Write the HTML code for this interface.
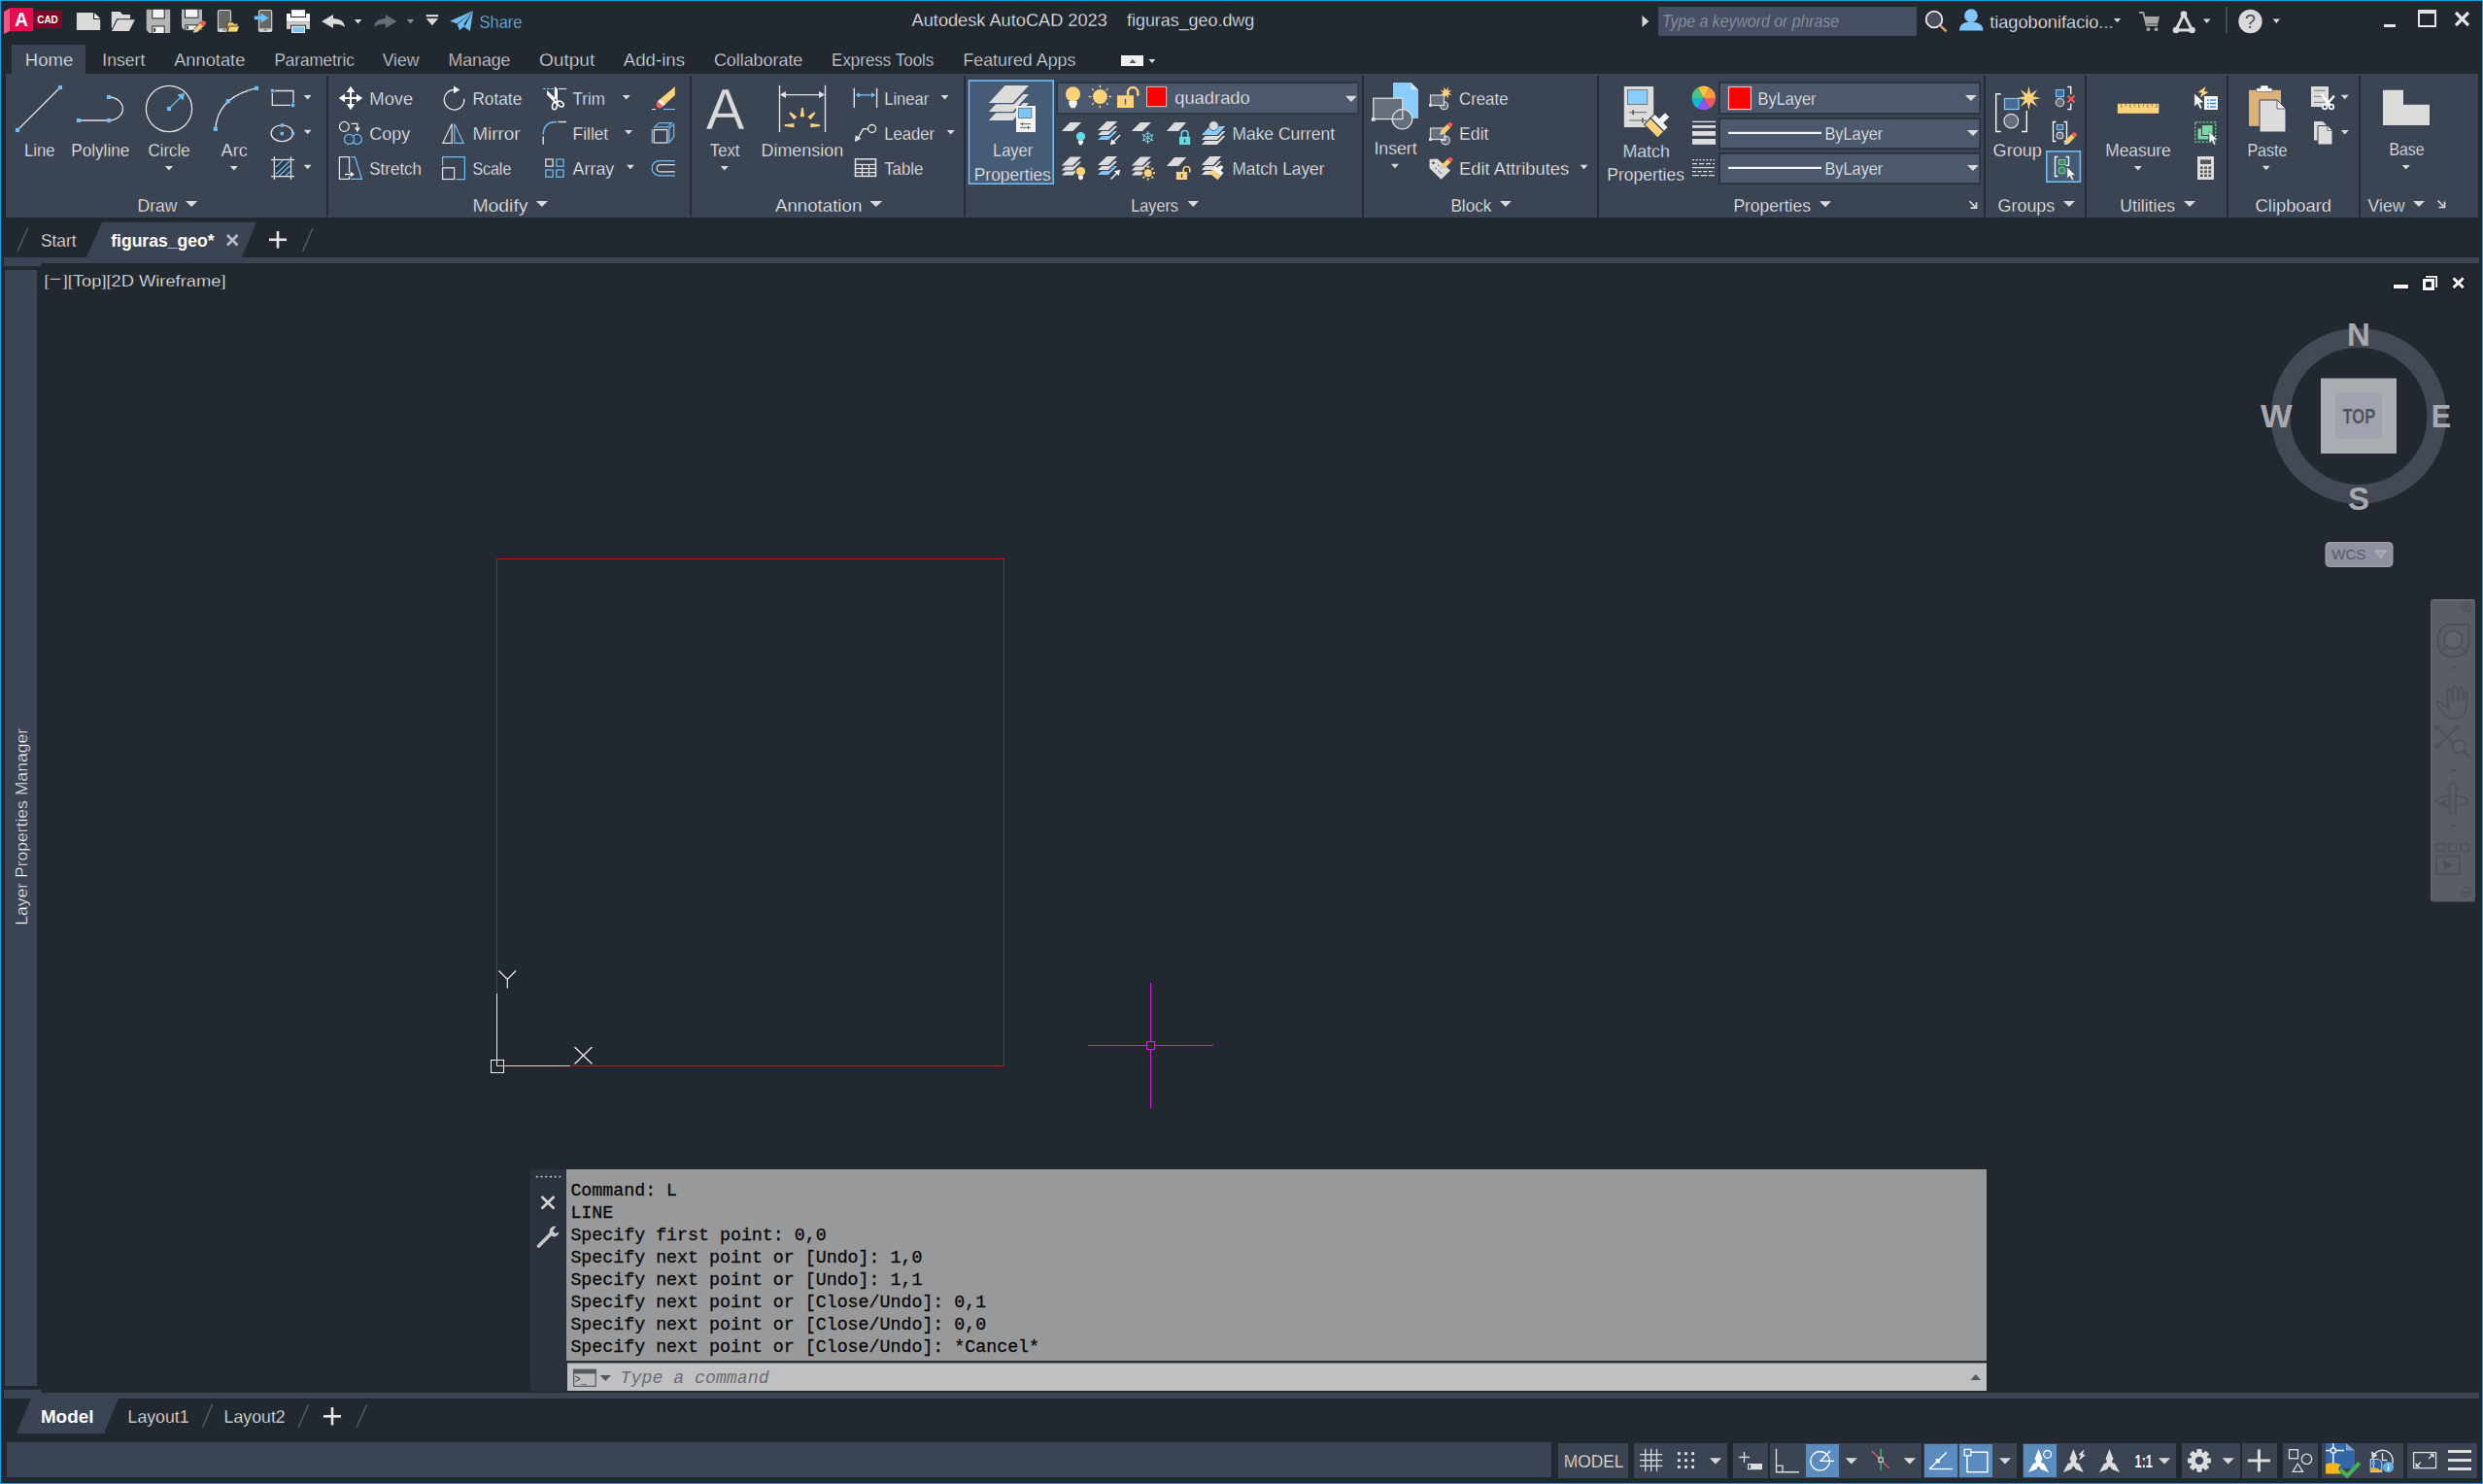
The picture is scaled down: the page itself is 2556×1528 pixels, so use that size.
<!DOCTYPE html>
<html lang="en"><head><meta charset="utf-8"><title>Autodesk AutoCAD 2023 - figuras_geo.dwg</title>
<style>
html,body{margin:0;padding:0;background:#212830;overflow:hidden}
body{width:2556px;height:1528px;font-family:'Liberation Sans',sans-serif}
svg{display:block}
text{white-space:pre}
</style></head><body>
<svg width="2556" height="1528" viewBox="0 0 2556 1528">
<rect x="0" y="0" width="2556" height="1528" fill="#212830" />
<rect x="0" y="0" width="2556" height="1" fill="#0ca3e8" />
<rect x="0" y="0" width="1" height="1528" fill="#0ca3e8" />
<rect x="2555" y="0" width="1" height="1528" fill="#0ca3e8" />
<rect x="0" y="1527" width="2556" height="1" fill="#0ca3e8" />
<rect x="12" y="46" width="76" height="30" fill="#3b4453" />
<rect x="6" y="76" width="2545" height="148" fill="#3b4453" />
<rect x="336" y="78" width="2" height="145" fill="#252c36" />
<rect x="710" y="78" width="2" height="145" fill="#252c36" />
<rect x="992" y="78" width="2" height="145" fill="#252c36" />
<rect x="1402" y="78" width="2" height="145" fill="#252c36" />
<rect x="1644" y="78" width="2" height="145" fill="#252c36" />
<rect x="2042" y="78" width="2" height="145" fill="#252c36" />
<rect x="2146" y="78" width="2" height="145" fill="#252c36" />
<rect x="2292" y="78" width="2" height="145" fill="#252c36" />
<rect x="2428" y="78" width="2" height="145" fill="#252c36" />
<polygon points="105,229 264,229 249,265 89,265" fill="#3b4453" stroke="none" stroke-width="1" />
<rect x="4" y="265" width="2548" height="6" fill="#3b4453" />
<rect x="4" y="271" width="38" height="3" fill="#3b4453" />
<rect x="5" y="278" width="33" height="1149" fill="#3b4453" />
<rect x="4" y="1434" width="2548" height="6" fill="#3b4453" />
<rect x="4" y="1431" width="38" height="3" fill="#3b4453" />
<polygon points="32,1440 122,1440 107,1476 17,1476" fill="#3b4453" stroke="none" stroke-width="1" />
<rect x="7" y="1485" width="1590" height="36" fill="#3b4453" />
<rect x="1604" y="1486" width="72" height="36" fill="#3b4453" />
<rect x="1682" y="1486" width="96" height="36" fill="#3b4453" />
<rect x="1784" y="1486" width="36" height="36" fill="#3b4453" />
<rect x="1822" y="1486" width="156" height="36" fill="#3b4453" />
<rect x="1980" y="1486" width="96" height="36" fill="#3b4453" />
<rect x="2082" y="1486" width="158" height="36" fill="#3b4453" />
<rect x="2246" y="1486" width="60" height="36" fill="#3b4453" />
<rect x="2308" y="1486" width="36" height="36" fill="#3b4453" />
<rect x="2350" y="1486" width="36" height="36" fill="#3b4453" />
<rect x="2390" y="1486" width="84" height="36" fill="#3b4453" />
<rect x="2478" y="1486" width="72" height="36" fill="#3b4453" />
<rect x="1859" y="1487" width="34" height="34" fill="#5b8cc0" />
<rect x="1981" y="1487" width="34" height="34" fill="#5b8cc0" />
<rect x="2017" y="1487" width="34" height="34" fill="#5b8cc0" />
<rect x="2083" y="1487" width="34" height="34" fill="#5b8cc0" />
<polygon points="4,12 10,8.5 10,32 4,35" fill="#e85a82" stroke="none" stroke-width="1" />
<rect x="10" y="8" width="24" height="24" fill="#e50c4f" />
<rect x="34" y="11" width="30" height="18" fill="#7b0828" />
<text x="15.17" y="26.8" font-family="'Liberation Sans', sans-serif" font-size="19.5" fill="#ffffff" font-weight="bold" font-style="normal" text-anchor="start" textLength="13.68" lengthAdjust="spacingAndGlyphs" >A</text>
<text x="38.26" y="24" font-family="'Liberation Sans', sans-serif" font-size="11" fill="#ffffff" font-weight="bold" font-style="normal" text-anchor="start" textLength="21.55" lengthAdjust="spacingAndGlyphs" >CAD</text>
<path d="M78.9 12.9 H96 V20.1 H103.2 V31.1 H78.9 Z" fill="#d9d9d9" stroke="none" stroke-width="1" />
<path d="M97.2 13.3 L103.1 19.1 H97.2 Z" fill="#fafafa" stroke="none" stroke-width="1" />
<path d="M114.8 12 H123.6 L126.3 14.9 H134.1 V19.2 H120.2 L115.6 28.8 L114.8 29.4 Z" fill="#d9d9d9" stroke="none" stroke-width="1" />
<path d="M121 20.3 H138.9 L132.9 31.9 H115 Z" fill="#d9d9d9" stroke="none" stroke-width="1" />
<path d="M150.7 9.7 H175.2 V34 H153.7 L150.7 31 Z" fill="#b4b4b4" stroke="none" stroke-width="1" />
<rect x="156.8" y="9.2" width="12.4" height="9.7" fill="#f2f2f2" stroke="#212830" stroke-width="1"/>
<rect x="156.8" y="27" width="12.4" height="7.5" fill="#f2f2f2" stroke="#212830" stroke-width="1"/>
<rect x="158.4" y="28.9" width="1.7" height="4" fill="#222" />
<path d="M187 9.7 H208 V30.8 H189.6 L187 28.2 Z" fill="#b4b4b4" stroke="none" stroke-width="1" />
<rect x="190.5" y="9.2" width="13.5" height="9" fill="#f2f2f2" stroke="#212830" stroke-width="1"/>
<rect x="190.9" y="25.8" width="12.5" height="5.5" fill="#f2f2f2" stroke="#212830" stroke-width="1"/>
<rect x="192.3" y="27" width="1.5" height="3" fill="#222" />
<path d="M198.9 33.8 L200.2 29.4 L207 22.2 L211 26 L203.8 32.8 Z" fill="#f7cb6c" stroke="#212830" stroke-width="0.8" />
<path d="M205.6 23.7 L207.6 21.6 Q210 20.6 211.8 22.8 Q212.6 24.4 211.4 25.6 L209.5 27.5 Z" fill="#f0585c" stroke="none" stroke-width="1" />
<path d="M198.9 33.8 L200.2 29.4 L203.8 32.8 Z" fill="#d2d2d2" stroke="none" stroke-width="1" />
<rect x="224.5" y="10.5" width="13" height="22" fill="#666666" rx="1.6" stroke="#d0d0d0" stroke-width="1.2"/>
<rect x="225.1" y="29.4" width="11.8" height="2.6" fill="#d0d0d0" />
<rect x="229.5" y="30.4" width="3" height="0.9" fill="#444" />
<path d="M234 22.7 H239.5 L241 24.2 H245 V33 H234 Z" fill="#f3c254" stroke="#212830" stroke-width="0.8" />
<path d="M236.2 27 H246.6 L244.3 33 H233.8 Z" fill="#fdd67c" stroke="#212830" stroke-width="0.8" />
<rect x="266.5" y="10.5" width="13.2" height="22" fill="#666666" rx="1.6" stroke="#d0d0d0" stroke-width="1.2"/>
<rect x="267.1" y="29.4" width="12" height="2.6" fill="#d0d0d0" />
<rect x="271.6" y="30.4" width="3" height="0.9" fill="#444" />
<path d="M261.8 16.6 H268.6 V13.4 L276.8 18.5 L268.6 23.6 V20.3 H261.8 Z" fill="#6cc0f8" stroke="none" stroke-width="1" />
<rect x="295" y="14" width="24" height="8.2" fill="#fafafa" />
<rect x="295" y="22.2" width="24" height="7.8" fill="#cdcdcd" />
<rect x="299.5" y="9.7" width="15.1" height="7.8" fill="#fafafa" stroke="#212830" stroke-width="1"/>
<rect x="299.5" y="26.2" width="15.1" height="8.2" fill="#fafafa" stroke="#212830" stroke-width="1"/>
<rect x="301.2" y="27.8" width="11.8" height="5.2" fill="#7cc4f3" />
<path d="M331.1 21.9 L343 15.1 V19.1 Q354.2 19.3 355 28 Q350.5 24.3 343 24.8 V29.1 Z" fill="#d9d9d9" stroke="none" stroke-width="1" />
<polygon points="364.9,19.9 372.3,19.9 368.6,24.6" fill="#d9d9d9" stroke="none" stroke-width="1" />
<path d="M408.6 21.9 L396.8 15.1 V19.1 Q385.8 19.3 385.1 28 Q389.5 24.3 396.8 24.8 V29.1 Z" fill="#656b77" stroke="none" stroke-width="1" />
<polygon points="418.8,19.9 426.3,19.9 422.55,24.6" fill="#888c94" stroke="none" stroke-width="1" />
<rect x="438.7" y="15.1" width="12.4" height="2.2" fill="#d9d9d9" />
<polygon points="438.7,19.1 451.1,19.1 444.9,26.2" fill="#d9d9d9" stroke="none" stroke-width="1" />
<polygon points="463.1,21.7 487,11.1 470.4,24.6" fill="#6cbdf2" stroke="none" stroke-width="1" />
<polygon points="470.9,25.2 487,11.1 473,31.6" fill="#6cbdf2" stroke="none" stroke-width="1" />
<polygon points="478,27.9 487,11.1 483.9,31.9" fill="#6cbdf2" stroke="none" stroke-width="1" />
<polygon points="473.6,30.4 478.5,27 476,23" fill="#6cbdf2" stroke="none" stroke-width="1" />
<text x="493.6" y="28.8" font-family="'Liberation Sans', sans-serif" font-size="18" fill="#74c0f4" font-weight="normal" font-style="normal" text-anchor="start" textLength="43.9" lengthAdjust="spacingAndGlyphs"  stroke="#212830" stroke-width="0.36">Share</text>
<polygon points="1690.5,16 1697.3,22 1690.5,28" fill="#d9d9d9" stroke="none" stroke-width="1" />
<rect x="1707" y="7" width="266" height="30" fill="#464f63" />
<text x="1711.01" y="28" font-family="'Liberation Sans', sans-serif" font-size="17.5" fill="#9aa1ae" font-weight="normal" font-style="italic" text-anchor="start" textLength="182.17" lengthAdjust="spacingAndGlyphs"  stroke="#464f63" stroke-width="0.36">Type a keyword or phrase</text>
<circle cx="1991" cy="20" r="8.3" fill="#4a505b" stroke="#ececec" stroke-width="1.8" />
<line x1="1997.3" y1="26.3" x2="2003.6" y2="32.3" stroke="#e0a866" stroke-width="2.3" />
<circle cx="2029" cy="16.2" r="6.9" fill="#80c6fa" stroke="none" stroke-width="1" />
<path d="M2017 31.6 Q2017 22.5 2029 22.5 Q2041.5 22.5 2041.5 31.6 Z" fill="#80c6fa" stroke="none" stroke-width="1" />
<text x="2048.18" y="28.8" font-family="'Liberation Sans', sans-serif" font-size="19" fill="#f8f8f8" font-weight="normal" font-style="normal" text-anchor="start" textLength="127.35" lengthAdjust="spacingAndGlyphs"  stroke="#212830" stroke-width="0.36">tiagobonifacio...</text>
<polygon points="2176,19 2183,19 2179.5,23.2" fill="#d9d9d9" stroke="none" stroke-width="1" />
<path d="M2202 12.8 H2206.3 L2209.6 26.2 H2221" fill="none" stroke="#a6a6a6" stroke-width="1.8" />
<path d="M2207.6 17 H2223 L2221.2 24.6 H2209.4 Z" fill="#a6a6a6" stroke="none" stroke-width="1" />
<circle cx="2211.4" cy="30.2" r="1.9" fill="#a6a6a6" stroke="none" stroke-width="1" />
<circle cx="2219.6" cy="30.2" r="1.9" fill="#a6a6a6" stroke="none" stroke-width="1" />
<path d="M2248 14.5 L2256.5 31 H2240 Z" fill="none" stroke="#d9d9d9" stroke-width="3" stroke-linejoin="round"/>
<circle cx="2248" cy="14.5" r="3.3" fill="#d9d9d9" stroke="none" stroke-width="1" />
<circle cx="2240" cy="31" r="3.3" fill="#d9d9d9" stroke="none" stroke-width="1" />
<circle cx="2256.5" cy="31" r="3.3" fill="#d9d9d9" stroke="none" stroke-width="1" />
<polygon points="2268,19.6 2275.4,19.6 2271.7,24" fill="#d9d9d9" stroke="none" stroke-width="1" />
<rect x="2291" y="7" width="1.6" height="27" fill="#4b5565" />
<circle cx="2316.5" cy="22" r="12.2" fill="#d9d9d9" stroke="none" stroke-width="1" />
<text x="2316.5" y="29" font-family="'Liberation Sans', sans-serif" font-size="19.5" fill="#4a4f58" font-weight="normal" font-style="normal" text-anchor="middle" >?</text>
<polygon points="2339.6,19.6 2347,19.6 2343.3,24" fill="#d9d9d9" stroke="none" stroke-width="1" />
<rect x="2454" y="25" width="12" height="3" fill="#e6e6e6" />
<rect x="2490" y="11" width="17" height="16" fill="none" stroke="#e6e6e6" stroke-width="2" />
<rect x="2489" y="10" width="19" height="4" fill="#e0e0e0" />
<line x1="2528" y1="13" x2="2541" y2="26" stroke="#e6e6e6" stroke-width="3.2" />
<line x1="2541" y1="13" x2="2528" y2="26" stroke="#e6e6e6" stroke-width="3.2" />
<text x="938.6" y="27.3" font-family="'Liberation Sans', sans-serif" font-size="18" fill="#f8f8f8" font-weight="normal" font-style="normal" text-anchor="start" textLength="201.2" lengthAdjust="spacingAndGlyphs"  stroke="#212830" stroke-width="0.36">Autodesk AutoCAD 2023</text>
<text x="1160" y="27.3" font-family="'Liberation Sans', sans-serif" font-size="18" fill="#f8f8f8" font-weight="normal" font-style="normal" text-anchor="start" textLength="131.2" lengthAdjust="spacingAndGlyphs"  stroke="#212830" stroke-width="0.36">figuras_geo.dwg</text>
<text x="25.8" y="68.1" font-family="'Liberation Sans', sans-serif" font-size="18" fill="#f2f2f2" font-weight="normal" font-style="normal" text-anchor="start" textLength="49.4" lengthAdjust="spacingAndGlyphs"  stroke="#3b4453" stroke-width="0.36">Home</text>
<text x="105.3" y="68.1" font-family="'Liberation Sans', sans-serif" font-size="18" fill="#dee1e5" font-weight="normal" font-style="normal" text-anchor="start" textLength="44.1" lengthAdjust="spacingAndGlyphs"  stroke="#212830" stroke-width="0.36">Insert</text>
<text x="179.2" y="68.1" font-family="'Liberation Sans', sans-serif" font-size="18" fill="#dee1e5" font-weight="normal" font-style="normal" text-anchor="start" textLength="73.1" lengthAdjust="spacingAndGlyphs"  stroke="#212830" stroke-width="0.36">Annotate</text>
<text x="282.4" y="68.1" font-family="'Liberation Sans', sans-serif" font-size="18" fill="#dee1e5" font-weight="normal" font-style="normal" text-anchor="start" textLength="82.4" lengthAdjust="spacingAndGlyphs"  stroke="#212830" stroke-width="0.36">Parametric</text>
<text x="393.7" y="68.1" font-family="'Liberation Sans', sans-serif" font-size="18" fill="#dee1e5" font-weight="normal" font-style="normal" text-anchor="start" textLength="37.6" lengthAdjust="spacingAndGlyphs"  stroke="#212830" stroke-width="0.36">View</text>
<text x="461.4" y="68.1" font-family="'Liberation Sans', sans-serif" font-size="18" fill="#dee1e5" font-weight="normal" font-style="normal" text-anchor="start" textLength="64.1" lengthAdjust="spacingAndGlyphs"  stroke="#212830" stroke-width="0.36">Manage</text>
<text x="555" y="68.1" font-family="'Liberation Sans', sans-serif" font-size="18" fill="#dee1e5" font-weight="normal" font-style="normal" text-anchor="start" textLength="57.3" lengthAdjust="spacingAndGlyphs"  stroke="#212830" stroke-width="0.36">Output</text>
<text x="641.8" y="68.1" font-family="'Liberation Sans', sans-serif" font-size="18" fill="#dee1e5" font-weight="normal" font-style="normal" text-anchor="start" textLength="63.2" lengthAdjust="spacingAndGlyphs"  stroke="#212830" stroke-width="0.36">Add-ins</text>
<text x="734.9" y="68.1" font-family="'Liberation Sans', sans-serif" font-size="18" fill="#dee1e5" font-weight="normal" font-style="normal" text-anchor="start" textLength="91.4" lengthAdjust="spacingAndGlyphs"  stroke="#212830" stroke-width="0.36">Collaborate</text>
<text x="856.1" y="68.1" font-family="'Liberation Sans', sans-serif" font-size="18" fill="#dee1e5" font-weight="normal" font-style="normal" text-anchor="start" textLength="105.2" lengthAdjust="spacingAndGlyphs"  stroke="#212830" stroke-width="0.36">Express Tools</text>
<text x="991.4" y="68.1" font-family="'Liberation Sans', sans-serif" font-size="18" fill="#dee1e5" font-weight="normal" font-style="normal" text-anchor="start" textLength="116" lengthAdjust="spacingAndGlyphs"  stroke="#212830" stroke-width="0.36">Featured Apps</text>
<rect x="1154" y="57" width="23" height="11" fill="#f0f0f0" />
<polygon points="1162.5,65 1169.5,65 1166,61" fill="#555" stroke="none" stroke-width="1" />
<polygon points="1182.4,61 1189.4,61 1185.9,65" fill="#d9d9d9" stroke="none" stroke-width="1" />
<line x1="28.6" y1="235" x2="18" y2="259" stroke="#59616e" stroke-width="1.3" />
<text x="41.91" y="254" font-family="'Liberation Sans', sans-serif" font-size="17.5" fill="#f8f8f8" font-weight="normal" font-style="normal" text-anchor="start" textLength="36.58" lengthAdjust="spacingAndGlyphs"  stroke="#212830" stroke-width="0.36">Start</text>
<text x="114.21" y="254" font-family="'Liberation Sans', sans-serif" font-size="17.5" fill="#ffffff" font-weight="bold" font-style="normal" text-anchor="start" textLength="106.28" lengthAdjust="spacingAndGlyphs" >figuras_geo*</text>
<line x1="234" y1="242" x2="244.5" y2="252.5" stroke="#b8bcc4" stroke-width="2.6" />
<line x1="244.5" y1="242" x2="234" y2="252.5" stroke="#b8bcc4" stroke-width="2.6" />
<rect x="277" y="245.5" width="18" height="2.6" fill="#e6e6e6" />
<rect x="284.7" y="238" width="2.6" height="17.6" fill="#e6e6e6" />
<line x1="322" y1="235" x2="311.5" y2="259" stroke="#59616e" stroke-width="1.3" />
<text x="45.5" y="295.4" font-family="'Liberation Sans', sans-serif" font-size="17" fill="#f8f8f8" font-weight="normal" font-style="normal" text-anchor="start"  stroke="#212830" stroke-width="0.36">[</text>
<text x="50.2" y="292.9" font-family="'Liberation Sans', sans-serif" font-size="17" fill="#f8f8f8" font-weight="normal" font-style="normal" text-anchor="start" textLength="13.2" lengthAdjust="spacingAndGlyphs"  stroke="#212830" stroke-width="0.36">−</text>
<text x="64.72" y="295.4" font-family="'Liberation Sans', sans-serif" font-size="17" fill="#f8f8f8" font-weight="normal" font-style="normal" text-anchor="start" textLength="167.75" lengthAdjust="spacingAndGlyphs"  stroke="#212830" stroke-width="0.36">][Top][2D Wireframe]</text>
<g transform="translate(27.8,952.8) rotate(-90)">
<text x="0" y="0" font-family="'Liberation Sans', sans-serif" font-size="17.3" fill="#f8f8f8" font-weight="normal" font-style="normal" text-anchor="start" textLength="202.8" lengthAdjust="spacingAndGlyphs"  stroke="#3b4453" stroke-width="0.36">Layer Properties Manager</text>
</g>
<text x="41.91" y="1465.4" font-family="'Liberation Sans', sans-serif" font-size="17.5" fill="#ffffff" font-weight="bold" font-style="normal" text-anchor="start" textLength="54.48" lengthAdjust="spacingAndGlyphs" >Model</text>
<text x="131.61" y="1465.4" font-family="'Liberation Sans', sans-serif" font-size="17.5" fill="#f8f8f8" font-weight="normal" font-style="normal" text-anchor="start" textLength="62.88" lengthAdjust="spacingAndGlyphs"  stroke="#212830" stroke-width="0.36">Layout1</text>
<text x="230.61" y="1465.4" font-family="'Liberation Sans', sans-serif" font-size="17.5" fill="#f8f8f8" font-weight="normal" font-style="normal" text-anchor="start" textLength="63.07" lengthAdjust="spacingAndGlyphs"  stroke="#212830" stroke-width="0.36">Layout2</text>
<line x1="218.5" y1="1446" x2="208.6" y2="1469.7" stroke="#59616e" stroke-width="1.3" />
<line x1="317.7" y1="1446" x2="307" y2="1469.7" stroke="#59616e" stroke-width="1.3" />
<line x1="377.8" y1="1446" x2="367" y2="1469.7" stroke="#59616e" stroke-width="1.3" />
<rect x="333" y="1457" width="18" height="2.6" fill="#e6e6e6" />
<rect x="340.7" y="1449" width="2.6" height="18.4" fill="#e6e6e6" />
<line x1="18" y1="134" x2="62" y2="90" stroke="#e2e2e2" stroke-width="1.3" />
<rect x="15.9" y="131.9" width="4.2" height="4.2" fill="#6cbdf2" />
<rect x="59.9" y="87.9" width="4.2" height="4.2" fill="#6cbdf2" />
<text x="24.9" y="161.2" font-family="'Liberation Sans', sans-serif" font-size="18" fill="#f8f8f8" font-weight="normal" font-style="normal" text-anchor="start" textLength="31.6" lengthAdjust="spacingAndGlyphs"  stroke="#3b4453" stroke-width="0.36">Line</text>
<path d="M81 124 H112 M112 100 A14.4 12 0 0 1 112 124" fill="none" stroke="#e2e2e2" stroke-width="1.3" />
<rect x="78.9" y="121.9" width="4.2" height="4.2" fill="#6cbdf2" />
<rect x="109.9" y="121.9" width="4.2" height="4.2" fill="#6cbdf2" />
<rect x="109.9" y="97.9" width="4.2" height="4.2" fill="#6cbdf2" />
<text x="73.3" y="161.2" font-family="'Liberation Sans', sans-serif" font-size="18" fill="#f8f8f8" font-weight="normal" font-style="normal" text-anchor="start" textLength="60" lengthAdjust="spacingAndGlyphs"  stroke="#3b4453" stroke-width="0.36">Polyline</text>
<circle cx="174" cy="112" r="23.6" fill="none" stroke="#e2e2e2" stroke-width="1.3" />
<line x1="174" y1="112" x2="186.5" y2="99.5" stroke="#6cbdf2" stroke-width="1.3" />
<polygon points="190,96 188.5,103.5 182.5,97.5" fill="#6cbdf2" stroke="none" stroke-width="1" />
<rect x="171.9" y="109.9" width="4.2" height="4.2" fill="#6cbdf2" />
<text x="152.6" y="161.2" font-family="'Liberation Sans', sans-serif" font-size="18" fill="#f8f8f8" font-weight="normal" font-style="normal" text-anchor="start" textLength="42.9" lengthAdjust="spacingAndGlyphs"  stroke="#3b4453" stroke-width="0.36">Circle</text>
<polygon points="169.9,170.9 178.1,170.9 174,175.5" fill="#d9d9d9" stroke="none" stroke-width="1" />
<path d="M221.8 132.8 Q224 100 264 90.8" fill="none" stroke="#e2e2e2" stroke-width="1.3" />
<rect x="219.7" y="130.7" width="4.2" height="4.2" fill="#6cbdf2" />
<rect x="232.7" y="102.1" width="4.2" height="4.2" fill="#6cbdf2" />
<rect x="261.9" y="88.7" width="4.2" height="4.2" fill="#6cbdf2" />
<text x="227.6" y="161.2" font-family="'Liberation Sans', sans-serif" font-size="18" fill="#f8f8f8" font-weight="normal" font-style="normal" text-anchor="start" textLength="27.2" lengthAdjust="spacingAndGlyphs"  stroke="#3b4453" stroke-width="0.36">Arc</text>
<polygon points="236.7,170.9 244.9,170.9 240.8,175.5" fill="#d9d9d9" stroke="none" stroke-width="1" />
<path d="M283 93.5 H302 V106 M298.8 108.4 H280.3 V96" fill="none" stroke="#e2e2e2" stroke-width="1.3" />
<rect x="278.9" y="91.8" width="3.4" height="3.4" fill="#6cbdf2" />
<rect x="299.8" y="106.7" width="3.4" height="3.4" fill="#6cbdf2" />
<polygon points="312.8,98 320.6,98 316.7,102.4" fill="#d9d9d9" stroke="none" stroke-width="1" />
<ellipse cx="290.3" cy="137.2" rx="11.2" ry="8.4" fill="none" stroke="#e2e2e2" stroke-width="1.3" />
<rect x="288.6" y="135.8" width="3.4" height="3.4" fill="#6cbdf2" />
<rect x="288.6" y="127.3" width="3.4" height="3.4" fill="#6cbdf2" />
<rect x="299.8" y="135.8" width="3.4" height="3.4" fill="#6cbdf2" />
<polygon points="312.8,133.8 320.6,133.8 316.7,138.2" fill="#d9d9d9" stroke="none" stroke-width="1" />
<rect x="283" y="165" width="16" height="16.5" fill="#2f3744" />
<g stroke="#6cbdf2" stroke-width="1.3">
<line x1="284" y1="172" x2="291" y2="165.5"/>
<line x1="284" y1="179.5" x2="298" y2="166"/>
<line x1="287.5" y1="181" x2="298.5" y2="170.5"/>
<line x1="294" y1="181" x2="298.5" y2="176.5"/>
</g>
<line x1="279.1" y1="164.5" x2="303.1" y2="164.5" stroke="#e2e2e2" stroke-width="1.3" />
<line x1="279.1" y1="181.6" x2="303.1" y2="181.6" stroke="#e2e2e2" stroke-width="1.3" />
<line x1="282.4" y1="161.2" x2="282.4" y2="184.9" stroke="#e2e2e2" stroke-width="1.3" />
<line x1="299.5" y1="161.2" x2="299.5" y2="184.9" stroke="#e2e2e2" stroke-width="1.3" />
<polygon points="312.8,169.8 320.6,169.8 316.7,174.2" fill="#d9d9d9" stroke="none" stroke-width="1" />
<text x="141.6" y="217.7" font-family="'Liberation Sans', sans-serif" font-size="18" fill="#f8f8f8" font-weight="normal" font-style="normal" text-anchor="start" textLength="40.9" lengthAdjust="spacingAndGlyphs"  stroke="#3b4453" stroke-width="0.36">Draw</text>
<polygon points="191,207 203.3,207 197.15,213" fill="#d9d9d9" stroke="none" stroke-width="1" />
<g stroke="#ffffff" stroke-width="2" fill="#ffffff">
<line x1="352" y1="101" x2="370" y2="101"/><line x1="361" y1="92" x2="361" y2="110"/>
</g>
<polygon points="361,88.8 365.3,95 356.7,95" fill="#ffffff" stroke="none" stroke-width="1" />
<polygon points="361,113.2 365.3,107 356.7,107" fill="#ffffff" stroke="none" stroke-width="1" />
<polygon points="348.8,101 355,96.7 355,105.3" fill="#ffffff" stroke="none" stroke-width="1" />
<polygon points="373.2,101 367,96.7 367,105.3" fill="#ffffff" stroke="none" stroke-width="1" />
<text x="380.3" y="108.1" font-family="'Liberation Sans', sans-serif" font-size="18" fill="#f8f8f8" font-weight="normal" font-style="normal" text-anchor="start" textLength="45" lengthAdjust="spacingAndGlyphs"  stroke="#3b4453" stroke-width="0.36">Move</text>
<circle cx="354.4" cy="130.4" r="4.9" fill="none" stroke="#e2e2e2" stroke-width="1.25" />
<circle cx="367.4" cy="143.4" r="5" fill="none" stroke="#6cbdf2" stroke-width="1.25" />
<circle cx="359.5" cy="143.4" r="5" fill="#3b4453" stroke="#6cbdf2" stroke-width="1.25" />
<path d="M361.5 127.4 H367.9 V132" fill="none" stroke="#e2e2e2" stroke-width="1.25" />
<polygon points="365,131.6 370.8,131.6 367.9,136" fill="#f2f2f2" stroke="none" stroke-width="1" />
<text x="380.3" y="143.9" font-family="'Liberation Sans', sans-serif" font-size="18" fill="#f8f8f8" font-weight="normal" font-style="normal" text-anchor="start" textLength="41.9" lengthAdjust="spacingAndGlyphs"  stroke="#3b4453" stroke-width="0.36">Copy</text>
<path d="M359.6 177.6 V161.6 H349.4 V184.4 H359.6 V181.6" fill="none" stroke="#e2e2e2" stroke-width="1.25" />
<path d="M361.5 161.6 H365.4 L372.4 184.4 H361.2" fill="none" stroke="#6cbdf2" stroke-width="1.25" />
<line x1="355" y1="179.5" x2="362" y2="179.5" stroke="#f2f2f2" stroke-width="1.3" />
<polygon points="360.8,176.8 364.9,179.5 360.8,182.2" fill="#f2f2f2" stroke="none" stroke-width="1" />
<text x="380.3" y="180" font-family="'Liberation Sans', sans-serif" font-size="18" fill="#f8f8f8" font-weight="normal" font-style="normal" text-anchor="start" textLength="53.7" lengthAdjust="spacingAndGlyphs"  stroke="#3b4453" stroke-width="0.36">Stretch</text>
<path d="M467.2 92.5 A10.3 10.3 0 1 0 477.8 101.6" fill="none" stroke="#e2e2e2" stroke-width="1.3" />
<polygon points="467,88.6 473.4,92.4 467,96.2" fill="#f4f4f4" stroke="none" stroke-width="1" />
<text x="486.4" y="108.1" font-family="'Liberation Sans', sans-serif" font-size="18" fill="#f8f8f8" font-weight="normal" font-style="normal" text-anchor="start" textLength="50.9" lengthAdjust="spacingAndGlyphs"  stroke="#3b4453" stroke-width="0.36">Rotate</text>
<path d="M465.2 127.6 L455.8 147.3 H465.2 Z" fill="none" stroke="#e2e2e2" stroke-width="1.2" />
<path d="M467.8 127.6 L477.2 147.3 H467.8 Z" fill="none" stroke="#6cbdf2" stroke-width="1.2" />
<text x="486.4" y="143.9" font-family="'Liberation Sans', sans-serif" font-size="18" fill="#f8f8f8" font-weight="normal" font-style="normal" text-anchor="start" textLength="49.1" lengthAdjust="spacingAndGlyphs"  stroke="#3b4453" stroke-width="0.36">Mirror</text>
<path d="M455.6 170.8 V161.7 H478.4 V184.5 H469.5" fill="none" stroke="#6cbdf2" stroke-width="1.25" />
<rect x="455.6" y="172.8" width="12" height="11.7" fill="none" stroke="#e2e2e2" stroke-width="1.25" />
<text x="486.4" y="180" font-family="'Liberation Sans', sans-serif" font-size="18" fill="#f8f8f8" font-weight="normal" font-style="normal" text-anchor="start" textLength="39.9" lengthAdjust="spacingAndGlyphs"  stroke="#3b4453" stroke-width="0.36">Scale</text>
<line x1="558.9" y1="91.5" x2="570" y2="91.5" stroke="#7cc6fb" stroke-width="1.2" stroke-dasharray="3 1"/>
<line x1="574.9" y1="91.5" x2="583.2" y2="91.5" stroke="#e2e2e2" stroke-width="1.2" />
<path d="M570.8 88.9 L574 91.6 V104 L570.8 105 Z" fill="#fafafa" stroke="none" stroke-width="1" />
<path d="M563 92.9 L570.8 100.3 L573.5 105 L571 106 L563 97.5 Z" fill="#fafafa" stroke="none" stroke-width="1" />
<ellipse cx="570.9" cy="109.1" rx="2.4" ry="3.6" fill="none" stroke="#fafafa" stroke-width="1.5" transform="rotate(8 570.9 109.1)"/>
<ellipse cx="577" cy="107" rx="2.4" ry="3.6" fill="none" stroke="#fafafa" stroke-width="1.5" transform="rotate(-52 577 107)"/>
<path d="M572.6 104 L575 105" fill="none" stroke="#fafafa" stroke-width="1.6" />
<circle cx="571.9" cy="102.9" r="0.8" fill="#1c222b" stroke="none" stroke-width="1" />
<text x="589.6" y="108.1" font-family="'Liberation Sans', sans-serif" font-size="18" fill="#f8f8f8" font-weight="normal" font-style="normal" text-anchor="start" textLength="33.4" lengthAdjust="spacingAndGlyphs"  stroke="#3b4453" stroke-width="0.36">Trim</text>
<polygon points="640.8,97.95 648.8,97.95 644.8,102.45" fill="#d9d9d9" stroke="none" stroke-width="1" />
<path d="M559.2 138.5 Q559.5 125.5 573 125.5" fill="none" stroke="#6cbdf2" stroke-width="1.4" />
<line x1="574.5" y1="125.5" x2="583" y2="125.5" stroke="#e2e2e2" stroke-width="1.4" />
<line x1="559.2" y1="140.5" x2="559.2" y2="148.8" stroke="#e2e2e2" stroke-width="1.4" />
<text x="589.6" y="143.9" font-family="'Liberation Sans', sans-serif" font-size="18" fill="#f8f8f8" font-weight="normal" font-style="normal" text-anchor="start" textLength="36.6" lengthAdjust="spacingAndGlyphs"  stroke="#3b4453" stroke-width="0.36">Fillet</text>
<polygon points="643,133.95 651,133.95 647,138.45" fill="#d9d9d9" stroke="none" stroke-width="1" />
<rect x="561.8" y="164" width="7.3" height="7.2" fill="none" stroke="#e2e2e2" stroke-width="1.25" />
<rect x="572.8" y="164" width="7.3" height="7.2" fill="none" stroke="#6cbdf2" stroke-width="1.25" />
<rect x="561.8" y="175" width="7.3" height="7.2" fill="none" stroke="#6cbdf2" stroke-width="1.25" />
<rect x="572.8" y="175" width="7.3" height="7.2" fill="none" stroke="#6cbdf2" stroke-width="1.25" />
<text x="589.6" y="180" font-family="'Liberation Sans', sans-serif" font-size="18" fill="#f8f8f8" font-weight="normal" font-style="normal" text-anchor="start" textLength="42.7" lengthAdjust="spacingAndGlyphs"  stroke="#3b4453" stroke-width="0.36">Array</text>
<polygon points="645,169.75 653,169.75 649,174.25" fill="#d9d9d9" stroke="none" stroke-width="1" />
<path d="M694.8 89.2 V98 L684.5 107.5 L678.5 103 Z" fill="#fdd27a" stroke="none" stroke-width="1" />
<path d="M678.8 102.6 L684.8 107.3 L682.6 109.6 L676.8 104.6 Z" fill="#fafafa" stroke="none" stroke-width="1" />
<path d="M676.8 104.6 L682.6 109.6 Q680 112.6 677 110.8 Q674.2 108 676.8 104.6 Z" fill="#f46464" stroke="none" stroke-width="1" />
<line x1="671" y1="112.5" x2="675" y2="112.5" stroke="#e2e2e2" stroke-width="1.2" />
<line x1="683" y1="112.5" x2="695" y2="112.5" stroke="#6cbdf2" stroke-width="1.2" />
<rect x="673.2" y="133.6" width="13.6" height="13.4" fill="none" stroke="#e2e2e2" stroke-width="1.25" />
<line x1="671.2" y1="133" x2="671.2" y2="147.6" stroke="#6cbdf2" stroke-width="1.2" />
<path d="M673.6 130.9 L678.2 126.6 H691.4 L687.2 130.9 Z" fill="none" stroke="#6cbdf2" stroke-width="1.2" />
<path d="M688.9 131.8 L693.7 128 V141 L688.9 146.6 Z" fill="none" stroke="#6cbdf2" stroke-width="1.2" />
<path d="M694.9 165.5 H678.7 A7.65 7.65 0 0 0 678.7 180.8 H694.9" fill="none" stroke="#6cbdf2" stroke-width="1.25" />
<path d="M694.9 169.5 H679.8 A3.7 3.7 0 0 0 679.8 176.9 H694.9" fill="none" stroke="#e2e2e2" stroke-width="1.25" />
<text x="486.4" y="217.7" font-family="'Liberation Sans', sans-serif" font-size="18" fill="#f8f8f8" font-weight="normal" font-style="normal" text-anchor="start" textLength="57.1" lengthAdjust="spacingAndGlyphs"  stroke="#3b4453" stroke-width="0.36">Modify</text>
<polygon points="551.8,207 564,207 557.9,213" fill="#d9d9d9" stroke="none" stroke-width="1" />
<text x="746.5" y="133.4" font-family="'Liberation Sans', sans-serif" font-size="59.5" fill="#dadada" font-weight="normal" font-style="normal" text-anchor="middle"  stroke="#3b4453" stroke-width="0.36">A</text>
<text x="730.8" y="160.8" font-family="'Liberation Sans', sans-serif" font-size="18" fill="#f8f8f8" font-weight="normal" font-style="normal" text-anchor="start" textLength="30.7" lengthAdjust="spacingAndGlyphs"  stroke="#3b4453" stroke-width="0.36">Text</text>
<polygon points="741.8,170.95 749.8,170.95 745.8,175.45" fill="#d9d9d9" stroke="none" stroke-width="1" />
<line x1="802.5" y1="87.8" x2="802.5" y2="136" stroke="#e2e2e2" stroke-width="1.4" />
<line x1="849.5" y1="87.8" x2="849.5" y2="136" stroke="#e2e2e2" stroke-width="1.4" />
<line x1="808" y1="97.6" x2="844" y2="97.6" stroke="#e2e2e2" stroke-width="1.4" />
<polygon points="802.8,97.6 809,94.1 809,101.1" fill="#e2e2e2" stroke="none" stroke-width="1" />
<polygon points="849.1,97.6 843,94.1 843,101.1" fill="#e2e2e2" stroke="none" stroke-width="1" />
<polygon points="828.05,120.2 823.75,120.2 825,110.9 826.8,110.9" fill="#fdd27a" stroke="none" stroke-width="1" />
<polygon points="834.53,123.36 831.44,120.37 838.1,115.27 839.4,116.52" fill="#fdd27a" stroke="none" stroke-width="1" />
<polygon points="820.36,120.37 817.27,123.36 812.4,116.52 813.7,115.27" fill="#fdd27a" stroke="none" stroke-width="1" />
<polygon points="834.4,131.35 834.4,127.05 844.1,128.3 844.1,130.1" fill="#fdd27a" stroke="none" stroke-width="1" />
<polygon points="817.4,127.05 817.4,131.35 807.7,130.1 807.7,128.3" fill="#fdd27a" stroke="none" stroke-width="1" />
<text x="783.5" y="160.8" font-family="'Liberation Sans', sans-serif" font-size="18" fill="#f8f8f8" font-weight="normal" font-style="normal" text-anchor="start" textLength="84.6" lengthAdjust="spacingAndGlyphs"  stroke="#3b4453" stroke-width="0.36">Dimension</text>
<line x1="879.3" y1="90.8" x2="879.3" y2="111" stroke="#e2e2e2" stroke-width="1.4" />
<line x1="902.6" y1="90.8" x2="902.6" y2="111" stroke="#e2e2e2" stroke-width="1.4" />
<line x1="883" y1="97.8" x2="899" y2="97.8" stroke="#6cbdf2" stroke-width="1.4" />
<polygon points="880.5,97.8 885,95.2 885,100.4" fill="#6cbdf2" stroke="none" stroke-width="1" />
<polygon points="901.4,97.8 897,95.2 897,100.4" fill="#6cbdf2" stroke="none" stroke-width="1" />
<text x="910.2" y="107.8" font-family="'Liberation Sans', sans-serif" font-size="18" fill="#f8f8f8" font-weight="normal" font-style="normal" text-anchor="start" textLength="46.1" lengthAdjust="spacingAndGlyphs"  stroke="#3b4453" stroke-width="0.36">Linear</text>
<polygon points="968.6,97.95 976.6,97.95 972.6,102.45" fill="#d9d9d9" stroke="none" stroke-width="1" />
<circle cx="897.6" cy="132.5" r="4" fill="none" stroke="#e2e2e2" stroke-width="1.4" />
<path d="M893.5 132.8 H888.5 L883 143" fill="none" stroke="#e2e2e2" stroke-width="1.4" />
<polygon points="879.8,146.3 880.8,139.2 886.3,142.8" fill="#e2e2e2" stroke="none" stroke-width="1" />
<text x="910.2" y="143.9" font-family="'Liberation Sans', sans-serif" font-size="18" fill="#f8f8f8" font-weight="normal" font-style="normal" text-anchor="start" textLength="52" lengthAdjust="spacingAndGlyphs"  stroke="#3b4453" stroke-width="0.36">Leader</text>
<polygon points="974.7,133.95 982.7,133.95 978.7,138.45" fill="#d9d9d9" stroke="none" stroke-width="1" />
<rect x="880.5" y="163.8" width="21" height="17.6" fill="none" stroke="#e2e2e2" stroke-width="1.5" />
<line x1="880.5" y1="169.5" x2="901.5" y2="169.5" stroke="#e2e2e2" stroke-width="1.3" />
<line x1="880.5" y1="173.6" x2="901.5" y2="173.6" stroke="#e2e2e2" stroke-width="1.3" />
<line x1="880.5" y1="177.6" x2="901.5" y2="177.6" stroke="#e2e2e2" stroke-width="1.3" />
<line x1="887.5" y1="169.5" x2="887.5" y2="181.4" stroke="#e2e2e2" stroke-width="1.3" />
<line x1="894.5" y1="169.5" x2="894.5" y2="181.4" stroke="#e2e2e2" stroke-width="1.3" />
<text x="910.2" y="180" font-family="'Liberation Sans', sans-serif" font-size="18" fill="#f8f8f8" font-weight="normal" font-style="normal" text-anchor="start" textLength="40.3" lengthAdjust="spacingAndGlyphs"  stroke="#3b4453" stroke-width="0.36">Table</text>
<text x="798" y="217.7" font-family="'Liberation Sans', sans-serif" font-size="18" fill="#f8f8f8" font-weight="normal" font-style="normal" text-anchor="start" textLength="89.3" lengthAdjust="spacingAndGlyphs"  stroke="#3b4453" stroke-width="0.36">Annotation</text>
<polygon points="895.4,207 908.2,207 901.8,213" fill="#d9d9d9" stroke="none" stroke-width="1" />
<rect x="997.5" y="83" width="86.7" height="106.2" fill="#465b75" stroke="#6cbdf2" stroke-width="1.6"/>
<polygon points="1017.9,124 1034.5,106 1059.1,106 1042.5,124" fill="#dcdcdc" stroke="none" stroke-width="1" />
<polygon points="1016.6,116.3 1033.2,98.3 1060.4,98.3 1043.8,116.3" fill="#465b75" stroke="none" stroke-width="1" />
<polygon points="1017.9,115 1034.5,97 1059.1,97 1042.5,115" fill="#dcdcdc" stroke="none" stroke-width="1" />
<polygon points="1016.6,107.3 1033.2,89.3 1060.4,89.3 1043.8,107.3" fill="#465b75" stroke="none" stroke-width="1" />
<polygon points="1017.9,106 1034.5,88 1059.1,88 1042.5,106" fill="#dcdcdc" stroke="none" stroke-width="1" />
<rect x="1046" y="109" width="20" height="27" fill="#f2f2f2" />
<rect x="1048.3" y="111.3" width="13.6" height="10.2" fill="#7cc6fb" stroke="#5b6470" stroke-width="0.8"/>
<line x1="1050" y1="127.6" x2="1061" y2="127.6" stroke="#666" stroke-width="1" />
<line x1="1050" y1="131.4" x2="1061" y2="131.4" stroke="#666" stroke-width="1" />
<line x1="1052.5" y1="126" x2="1052.5" y2="129.2" stroke="#666" stroke-width="1.2" />
<line x1="1058.5" y1="129.8" x2="1058.5" y2="133" stroke="#666" stroke-width="1.2" />
<text x="1022.1" y="160.6" font-family="'Liberation Sans', sans-serif" font-size="18" fill="#f8f8f8" font-weight="normal" font-style="normal" text-anchor="start" textLength="41.1" lengthAdjust="spacingAndGlyphs"  stroke="#465b75" stroke-width="0.36">Layer</text>
<text x="1002.8" y="185.6" font-family="'Liberation Sans', sans-serif" font-size="18" fill="#f8f8f8" font-weight="normal" font-style="normal" text-anchor="start" textLength="79" lengthAdjust="spacingAndGlyphs"  stroke="#465b75" stroke-width="0.36">Properties</text>
<rect x="1087.4" y="84.4" width="311.6" height="33.3" fill="#2b323e" />
<rect x="1089" y="86" width="308.6" height="30.2" fill="#4c586c" />
<circle cx="1104.5" cy="96.8" r="7.6" fill="#fdd27a" stroke="none" stroke-width="1" />
<path d="M1100.32 104.1 h8.36 v3.42 l-2.28 3.8 h-3.8 l-2.28 -3.8 z" fill="#f4f4f4" stroke="none" stroke-width="1" />
<circle cx="1132.4" cy="99.5" r="7.4" fill="#fdd27a" stroke="none" stroke-width="1" />
<line x1="1141.4" y1="99.5" x2="1144.2" y2="99.5" stroke="#fdd27a" stroke-width="1.3" />
<line x1="1138.76" y1="105.86" x2="1140.74" y2="107.84" stroke="#fdd27a" stroke-width="1.3" />
<line x1="1132.4" y1="108.5" x2="1132.4" y2="111.3" stroke="#fdd27a" stroke-width="1.3" />
<line x1="1126.04" y1="105.86" x2="1124.06" y2="107.84" stroke="#fdd27a" stroke-width="1.3" />
<line x1="1123.4" y1="99.5" x2="1120.6" y2="99.5" stroke="#fdd27a" stroke-width="1.3" />
<line x1="1126.04" y1="93.14" x2="1124.06" y2="91.16" stroke="#fdd27a" stroke-width="1.3" />
<line x1="1132.4" y1="90.5" x2="1132.4" y2="87.7" stroke="#fdd27a" stroke-width="1.3" />
<line x1="1138.76" y1="93.14" x2="1140.74" y2="91.16" stroke="#fdd27a" stroke-width="1.3" />
<rect x="1150" y="98.2" width="17" height="12.8" fill="#fdd27a" />
<rect x="1157.8" y="101.78" width="1.4" height="5.76" fill="#4c586c" />
<path d="M1161.05 98.2 V95.14 A5.1 5.1 0 0 1 1171.25 95.14 V98.7" fill="none" stroke="#fdd27a" stroke-width="2.55" />
<rect x="1180.5" y="89.4" width="20.2" height="20.2" fill="#ff0000" stroke="#dcbcbc" stroke-width="1"/>
<text x="1209.2" y="106.8" font-family="'Liberation Sans', sans-serif" font-size="18" fill="#f8f8f8" font-weight="normal" font-style="normal" text-anchor="start" textLength="77.6" lengthAdjust="spacingAndGlyphs"  stroke="#4c586c" stroke-width="0.36">quadrado</text>
<polygon points="1385,98.8 1396.8,98.8 1390.9,105" fill="#d9d9d9" stroke="none" stroke-width="1" />
<polygon points="1092.8,135.1 1101.7,125.9 1113.2,125.9 1104.3,135.1" fill="#dcdcdc" stroke="none" stroke-width="1" />
<circle cx="1112.5" cy="140.5" r="4.6" fill="#6ad8e0" stroke="none" stroke-width="1" />
<path d="M1109.97 144.8 h5.06 v2.07 l-1.38 2.3 h-2.3 l-1.38 -2.3 z" fill="#f4f4f4" stroke="none" stroke-width="1" />
<polygon points="1130,143.9 1139.3,135 1150.2,135 1140.9,143.9" fill="#7cc6fb" stroke="none" stroke-width="1" />
<polygon points="1128.9,140 1138.2,131.1 1151.3,131.1 1142,140" fill="#3b4453" stroke="none" stroke-width="1" />
<polygon points="1130,138.9 1139.3,130 1150.2,130 1140.9,138.9" fill="#dcdcdc" stroke="none" stroke-width="1" />
<polygon points="1128.9,135 1138.2,126.1 1151.3,126.1 1142,135" fill="#3b4453" stroke="none" stroke-width="1" />
<polygon points="1130,133.9 1139.3,125 1150.2,125 1140.9,133.9" fill="#dcdcdc" stroke="none" stroke-width="1" />
<line x1="1153" y1="139" x2="1145.5" y2="146.5" stroke="#f4f4f4" stroke-width="1.4" />
<polygon points="1142.8,149.3 1144.3,143.2 1149,147.8" fill="#f4f4f4" stroke="none" stroke-width="1" />
<polygon points="1164.8,135.1 1173.9,125.9 1185.1,125.9 1176,135.1" fill="#dcdcdc" stroke="none" stroke-width="1" />
<line x1="1181.6" y1="135.7" x2="1181.6" y2="147.7" stroke="#6ad8e0" stroke-width="1" />
<line x1="1186.8" y1="138.7" x2="1176.4" y2="144.7" stroke="#6ad8e0" stroke-width="1" />
<line x1="1186.8" y1="144.7" x2="1176.4" y2="138.7" stroke="#6ad8e0" stroke-width="1" />
<circle cx="1181.6" cy="141.7" r="4.3" fill="none" stroke="#6ad8e0" stroke-width="1" />
<rect x="1185.75" y="143.8" width="1.4" height="1.4" fill="#6ad8e0" />
<rect x="1180.9" y="146.6" width="1.4" height="1.4" fill="#6ad8e0" />
<rect x="1176.05" y="143.8" width="1.4" height="1.4" fill="#6ad8e0" />
<rect x="1176.05" y="138.2" width="1.4" height="1.4" fill="#6ad8e0" />
<rect x="1180.9" y="135.4" width="1.4" height="1.4" fill="#6ad8e0" />
<rect x="1185.75" y="138.2" width="1.4" height="1.4" fill="#6ad8e0" />
<polygon points="1200.9,135 1209,126 1221.2,126 1213.1,135" fill="#dcdcdc" stroke="none" stroke-width="1" />
<rect x="1214" y="140.9" width="11.2" height="8.1" fill="#6ad8e0" />
<rect x="1218.9" y="143.17" width="1.4" height="3.65" fill="#3b4453" />
<path d="M1216.24 140.9 V137.88 A3.36 3.36 0 0 1 1222.96 137.88 V140.9" fill="none" stroke="#6ad8e0" stroke-width="1.6" />
<polygon points="1236.9,149 1245.4,140 1261.4,140 1252.9,149" fill="#dcdcdc" stroke="none" stroke-width="1" />
<polygon points="1235.8,145.1 1244.3,136.1 1262.5,136.1 1254,145.1" fill="#3b4453" stroke="none" stroke-width="1" />
<polygon points="1236.9,144 1245.4,135 1261.4,135 1252.9,144" fill="#dcdcdc" stroke="none" stroke-width="1" />
<polygon points="1235.8,140.1 1244.3,131.1 1262.5,131.1 1254,140.1" fill="#3b4453" stroke="none" stroke-width="1" />
<polygon points="1236.9,139 1245.4,130 1261.4,130 1252.9,139" fill="#8accfb" stroke="none" stroke-width="1" />
<circle cx="1249.4" cy="129.6" r="4.9" fill="#dcdcdc" stroke="#3b4453" stroke-width="0.8" />
<text x="1268.4" y="143.9" font-family="'Liberation Sans', sans-serif" font-size="18" fill="#f8f8f8" font-weight="normal" font-style="normal" text-anchor="start" textLength="105.7" lengthAdjust="spacingAndGlyphs"  stroke="#3b4453" stroke-width="0.36">Make Current</text>
<polygon points="1092.8,180.4 1101.7,171.5 1113.2,171.5 1104.3,180.4" fill="#dcdcdc" stroke="none" stroke-width="1" />
<polygon points="1091.7,176.5 1100.6,167.6 1114.3,167.6 1105.4,176.5" fill="#3b4453" stroke="none" stroke-width="1" />
<polygon points="1092.8,175.4 1101.7,166.5 1113.2,166.5 1104.3,175.4" fill="#dcdcdc" stroke="none" stroke-width="1" />
<polygon points="1091.7,171.5 1100.6,162.6 1114.3,162.6 1105.4,171.5" fill="#3b4453" stroke="none" stroke-width="1" />
<polygon points="1092.8,170.4 1101.7,161.5 1113.2,161.5 1104.3,170.4" fill="#dcdcdc" stroke="none" stroke-width="1" />
<circle cx="1112.5" cy="176.6" r="5.6" fill="#3b4453" stroke="none" stroke-width="1" />
<circle cx="1112.5" cy="176.6" r="4.6" fill="#fdd27a" stroke="none" stroke-width="1" />
<path d="M1109.97 180.9 h5.06 v2.07 l-1.38 2.3 h-2.3 l-1.38 -2.3 z" fill="#f4f4f4" stroke="none" stroke-width="1" />
<polygon points="1130,179.9 1139.3,171 1150.2,171 1140.9,179.9" fill="#7cc6fb" stroke="none" stroke-width="1" />
<polygon points="1128.9,176 1138.2,167.1 1151.3,167.1 1142,176" fill="#3b4453" stroke="none" stroke-width="1" />
<polygon points="1130,174.9 1139.3,166 1150.2,166 1140.9,174.9" fill="#dcdcdc" stroke="none" stroke-width="1" />
<polygon points="1128.9,171 1138.2,162.1 1151.3,162.1 1142,171" fill="#3b4453" stroke="none" stroke-width="1" />
<polygon points="1130,169.9 1139.3,161 1150.2,161 1140.9,169.9" fill="#dcdcdc" stroke="none" stroke-width="1" />
<line x1="1143.5" y1="184.6" x2="1150.5" y2="177.6" stroke="#f4f4f4" stroke-width="1.4" />
<polygon points="1153.2,174.8 1151.7,181 1147,176.3" fill="#f4f4f4" stroke="none" stroke-width="1" />
<polygon points="1164.8,180.4 1173.9,171.5 1185.1,171.5 1176,180.4" fill="#dcdcdc" stroke="none" stroke-width="1" />
<polygon points="1163.7,176.5 1172.8,167.6 1186.2,167.6 1177.1,176.5" fill="#3b4453" stroke="none" stroke-width="1" />
<polygon points="1164.8,175.4 1173.9,166.5 1185.1,166.5 1176,175.4" fill="#dcdcdc" stroke="none" stroke-width="1" />
<polygon points="1163.7,171.5 1172.8,162.6 1186.2,162.6 1177.1,171.5" fill="#3b4453" stroke="none" stroke-width="1" />
<polygon points="1164.8,170.4 1173.9,161.5 1185.1,161.5 1176,170.4" fill="#dcdcdc" stroke="none" stroke-width="1" />
<circle cx="1181.8" cy="178.2" r="6.8" fill="#3b4453" stroke="none" stroke-width="1" />
<circle cx="1181.8" cy="178.2" r="3.9" fill="#fdd27a" stroke="none" stroke-width="1" />
<rect x="1187.05" y="177.2" width="2" height="2" fill="#fdd27a" />
<rect x="1185.22" y="181.62" width="2" height="2" fill="#fdd27a" />
<rect x="1180.8" y="183.45" width="2" height="2" fill="#fdd27a" />
<rect x="1176.38" y="181.62" width="2" height="2" fill="#fdd27a" />
<rect x="1174.55" y="177.2" width="2" height="2" fill="#fdd27a" />
<rect x="1176.38" y="172.78" width="2" height="2" fill="#fdd27a" />
<rect x="1180.8" y="170.95" width="2" height="2" fill="#fdd27a" />
<rect x="1185.22" y="172.78" width="2" height="2" fill="#fdd27a" />
<polygon points="1200.9,171 1209,162 1221.2,162 1213.1,171" fill="#dcdcdc" stroke="none" stroke-width="1" />
<rect x="1210.9" y="176.9" width="11.2" height="8.1" fill="#fdd27a" />
<rect x="1215.8" y="179.17" width="1.4" height="3.65" fill="#3b4453" />
<path d="M1218.18 176.9 V174.88 A3.36 3.36 0 0 1 1224.9 174.88 V177.4" fill="none" stroke="#fdd27a" stroke-width="1.68" />
<polygon points="1236.9,179.9 1245.3,171 1257.3,171 1248.9,179.9" fill="#dcdcdc" stroke="none" stroke-width="1" />
<polygon points="1235.8,176 1244.2,167.1 1258.4,167.1 1250,176" fill="#3b4453" stroke="none" stroke-width="1" />
<polygon points="1236.9,174.9 1245.3,166 1257.3,166 1248.9,174.9" fill="#dcdcdc" stroke="none" stroke-width="1" />
<polygon points="1235.8,171 1244.2,162.1 1258.4,162.1 1250,171" fill="#3b4453" stroke="none" stroke-width="1" />
<polygon points="1236.9,169.9 1245.3,161 1257.3,161 1248.9,169.9" fill="#dcdcdc" stroke="none" stroke-width="1" />
<g transform="translate(1254,176) rotate(40)">
<rect x="-5.5" y="-2" width="11" height="4.2" fill="#f6f6f6" />
<rect x="-1.6" y="-6.5" width="3.2" height="5" fill="#f6f6f6" />
<rect x="-5.5" y="2.2" width="11" height="5.2" fill="#fdd27a" />
</g>
<text x="1268.4" y="180" font-family="'Liberation Sans', sans-serif" font-size="18" fill="#f8f8f8" font-weight="normal" font-style="normal" text-anchor="start" textLength="95.1" lengthAdjust="spacingAndGlyphs"  stroke="#3b4453" stroke-width="0.36">Match Layer</text>
<text x="1164.3" y="217.5" font-family="'Liberation Sans', sans-serif" font-size="18" fill="#f8f8f8" font-weight="normal" font-style="normal" text-anchor="start" textLength="48.6" lengthAdjust="spacingAndGlyphs"  stroke="#3b4453" stroke-width="0.36">Layers</text>
<polygon points="1222.6,207 1234,207 1228.3,213" fill="#d9d9d9" stroke="none" stroke-width="1" />
<path d="M1434 85 H1452.5 L1460 92.5 V122 H1434 Z" fill="#8accfb" stroke="none" stroke-width="1" />
<path d="M1452.5 85 L1460 92.5 H1452.5 Z" fill="#c5e6fd" stroke="none" stroke-width="1" />
<circle cx="1443.5" cy="122.6" r="10.3" fill="#666e7c" stroke="#dcdcdc" stroke-width="1.3" />
<rect x="1413.8" y="101.2" width="30" height="21.4" fill="#666e7c" stroke="#dcdcdc" stroke-width="1.3"/>
<path d="M1443.8 112.5 A10.3 10.3 0 0 0 1433.3 122.6" fill="none" stroke="#dcdcdc" stroke-width="1.3" />
<rect x="1411.8" y="121" width="3.8" height="3.8" fill="#dcdcdc" />
<text x="1414.4" y="158.8" font-family="'Liberation Sans', sans-serif" font-size="18" fill="#f8f8f8" font-weight="normal" font-style="normal" text-anchor="start" textLength="44.3" lengthAdjust="spacingAndGlyphs"  stroke="#3b4453" stroke-width="0.36">Insert</text>
<polygon points="1432,168.75 1440,168.75 1436,173.25" fill="#d9d9d9" stroke="none" stroke-width="1" />
<circle cx="1486.6" cy="108.7" r="4" fill="#666e7c" stroke="#dcdcdc" stroke-width="1.1" />
<rect x="1472.5" y="98" width="14" height="10.5" fill="#666e7c" stroke="#dcdcdc" stroke-width="1.2"/>
<rect x="1471" y="106.8" width="3" height="3" fill="#dcdcdc" />
<polygon points="1494.41,97.95 1490.48,97.48 1490.95,101.41 1488.5,98.3 1486.05,101.41 1486.52,97.48 1482.59,97.95 1485.7,95.5 1482.59,93.05 1486.52,93.52 1486.05,89.59 1488.5,92.7 1490.95,89.59 1490.48,93.52 1494.41,93.05 1491.3,95.5" fill="#fdd27a" stroke="none" stroke-width="1" />
<text x="1502" y="108.2" font-family="'Liberation Sans', sans-serif" font-size="18" fill="#f8f8f8" font-weight="normal" font-style="normal" text-anchor="start" textLength="50.5" lengthAdjust="spacingAndGlyphs"  stroke="#3b4453" stroke-width="0.36">Create</text>
<circle cx="1488" cy="144.5" r="4.4" fill="#666e7c" stroke="#dcdcdc" stroke-width="1.1" />
<rect x="1472.5" y="132" width="14.5" height="11.5" fill="#666e7c" stroke="#dcdcdc" stroke-width="1.2"/>
<line x1="1488" y1="140" x2="1488" y2="144.5" stroke="#dcdcdc" stroke-width="1.1" />
<line x1="1483.6" y1="144.5" x2="1488" y2="144.5" stroke="#dcdcdc" stroke-width="1.1" />
<rect x="1471" y="142" width="3" height="3" fill="#dcdcdc" />
<g transform="translate(1482.3,138.8) scale(1)">
<path d="M0 0 L1.1 -4.5 L7.4 -10.8 L10.8 -7.4 L4.5 -1.1 Z" fill="#f7cb6c" stroke="none" stroke-width="1" />
<path d="M7.4 -10.8 L9 -12.4 Q11.6 -13.4 12.9 -11.2 Q13.2 -9.8 12.4 -9 L10.8 -7.4 Z" fill="#f25a5e" stroke="none" stroke-width="1" />
<path d="M0 0 L1.1 -4.5 L4.5 -1.1 Z" fill="#cfcfcf" stroke="none" stroke-width="1" />
</g>
<text x="1502" y="143.9" font-family="'Liberation Sans', sans-serif" font-size="18" fill="#f8f8f8" font-weight="normal" font-style="normal" text-anchor="start" textLength="30.5" lengthAdjust="spacingAndGlyphs"  stroke="#3b4453" stroke-width="0.36">Edit</text>
<path d="M1471.5 164 L1479.5 163.5 L1493 175.5 L1483.5 184.8 L1471.5 173 Z" fill="#dcdcdc" stroke="none" stroke-width="1" />
<circle cx="1475.5" cy="167.8" r="1.3" fill="#444" stroke="none" stroke-width="1" />
<g stroke="#555" stroke-width="1">
<line x1="1477" y1="172.5" x2="1479" y2="174.3"/><line x1="1480.2" y1="175.5" x2="1484" y2="179"/><line x1="1480" y1="169.5" x2="1481.8" y2="171.2"/>
</g>
<g transform="translate(1482.6,174.6) scale(1)">
<path d="M0 0 L1.1 -4.5 L7.4 -10.8 L10.8 -7.4 L4.5 -1.1 Z" fill="#f7cb6c" stroke="none" stroke-width="1" />
<path d="M7.4 -10.8 L9 -12.4 Q11.6 -13.4 12.9 -11.2 Q13.2 -9.8 12.4 -9 L10.8 -7.4 Z" fill="#f25a5e" stroke="none" stroke-width="1" />
<path d="M0 0 L1.1 -4.5 L4.5 -1.1 Z" fill="#cfcfcf" stroke="none" stroke-width="1" />
</g>
<text x="1502" y="180" font-family="'Liberation Sans', sans-serif" font-size="18" fill="#f8f8f8" font-weight="normal" font-style="normal" text-anchor="start" textLength="113.1" lengthAdjust="spacingAndGlyphs"  stroke="#3b4453" stroke-width="0.36">Edit Attributes</text>
<polygon points="1626.5,169.75 1634.5,169.75 1630.5,174.25" fill="#d9d9d9" stroke="none" stroke-width="1" />
<text x="1493.4" y="217.7" font-family="'Liberation Sans', sans-serif" font-size="18" fill="#f8f8f8" font-weight="normal" font-style="normal" text-anchor="start" textLength="42" lengthAdjust="spacingAndGlyphs"  stroke="#3b4453" stroke-width="0.36">Block</text>
<polygon points="1544,207 1555.8,207 1549.9,213" fill="#d9d9d9" stroke="none" stroke-width="1" />
<rect x="1671.8" y="89" width="30.4" height="42" fill="#dcdcdc" />
<rect x="1675.5" y="92.4" width="20.3" height="15" fill="#8accfb" stroke="#666" stroke-width="0.8"/>
<line x1="1677" y1="115.7" x2="1695" y2="115.7" stroke="#666" stroke-width="1" />
<line x1="1677" y1="124" x2="1695" y2="124" stroke="#666" stroke-width="1" />
<rect x="1680.3" y="113.2" width="1.6" height="5" fill="#555" />
<rect x="1690" y="121.5" width="1.6" height="5" fill="#555" />
<g transform="translate(1708,126.5) rotate(45) scale(1.15)">
<rect x="-8.5" y="-3" width="17" height="5.5" fill="#f6f6f6" stroke="#3b4453" stroke-width="1"/>
<rect x="-2.6" y="-10" width="5.2" height="8" fill="#f6f6f6" />
<rect x="-8.5" y="2.5" width="17" height="8" fill="#fdd27a" stroke="#3b4453" stroke-width="1"/>
</g>
<text x="1670.4" y="162.3" font-family="'Liberation Sans', sans-serif" font-size="18" fill="#f8f8f8" font-weight="normal" font-style="normal" text-anchor="start" textLength="48.5" lengthAdjust="spacingAndGlyphs"  stroke="#3b4453" stroke-width="0.36">Match</text>
<text x="1654.3" y="186.3" font-family="'Liberation Sans', sans-serif" font-size="18" fill="#f8f8f8" font-weight="normal" font-style="normal" text-anchor="start" textLength="79.6" lengthAdjust="spacingAndGlyphs"  stroke="#3b4453" stroke-width="0.36">Properties</text>
<path d="M1753.8 100.9 L1747.7 90.33 A12.2 12.2 0 0 1 1759.9 90.33 Z" fill="#fcc23c" stroke="none" stroke-width="1" />
<path d="M1753.8 100.9 L1759.9 90.33 A12.2 12.2 0 0 1 1766 100.9 Z" fill="#fb9a3c" stroke="none" stroke-width="1" />
<path d="M1753.8 100.9 L1766 100.9 A12.2 12.2 0 0 1 1759.9 111.47 Z" fill="#ea5a5a" stroke="none" stroke-width="1" />
<path d="M1753.8 100.9 L1759.9 111.47 A12.2 12.2 0 0 1 1747.7 111.47 Z" fill="#8a56f0" stroke="none" stroke-width="1" />
<path d="M1753.8 100.9 L1747.7 111.47 A12.2 12.2 0 0 1 1741.6 100.9 Z" fill="#18b2d8" stroke="none" stroke-width="1" />
<path d="M1753.8 100.9 L1741.6 100.9 A12.2 12.2 0 0 1 1747.7 90.33 Z" fill="#44c884" stroke="none" stroke-width="1" />
<rect x="1742" y="124.7" width="24" height="1.3" fill="#dcdcdc" />
<rect x="1742" y="129" width="24" height="2.8" fill="#dcdcdc" />
<rect x="1742" y="135" width="24" height="4.8" fill="#dcdcdc" />
<rect x="1742" y="143" width="24" height="5.8" fill="#dcdcdc" />
<line x1="1742" y1="164.6" x2="1765" y2="164.6" stroke="#dcdcdc" stroke-width="1.2" stroke-dasharray="2 1.6"/>
<line x1="1742" y1="168.6" x2="1765" y2="168.6" stroke="#dcdcdc" stroke-width="1.2" stroke-dasharray="5 2"/>
<line x1="1742" y1="172.6" x2="1765" y2="172.6" stroke="#dcdcdc" stroke-width="1.2" stroke-dasharray="24 0"/>
<line x1="1742" y1="176.6" x2="1765" y2="176.6" stroke="#dcdcdc" stroke-width="1.2" stroke-dasharray="4 1.6"/>
<line x1="1742" y1="180.6" x2="1765" y2="180.6" stroke="#dcdcdc" stroke-width="1.2" stroke-dasharray="7 1.5"/>
<rect x="1769" y="84" width="270" height="34" fill="#2b323e" />
<rect x="1770.8" y="85.8" width="266.6" height="30.4" fill="#4c586c" />
<rect x="1769" y="121" width="270" height="33" fill="#2b323e" />
<rect x="1770.8" y="122.8" width="266.6" height="29.4" fill="#4c586c" />
<rect x="1769" y="157" width="270" height="33" fill="#2b323e" />
<rect x="1770.8" y="158.8" width="266.6" height="29.4" fill="#4c586c" />
<rect x="1779.5" y="89.5" width="23" height="23" fill="#ff0000" stroke="#e0c8c8" stroke-width="1.2"/>
<text x="1809.6" y="108" font-family="'Liberation Sans', sans-serif" font-size="18" fill="#f8f8f8" font-weight="normal" font-style="normal" text-anchor="start" textLength="59.9" lengthAdjust="spacingAndGlyphs"  stroke="#4c586c" stroke-width="0.36">ByLayer</text>
<rect x="1779" y="135.8" width="96" height="2.2" fill="#f4f4f4" />
<text x="1878.5" y="144" font-family="'Liberation Sans', sans-serif" font-size="18" fill="#f8f8f8" font-weight="normal" font-style="normal" text-anchor="start" textLength="59.8" lengthAdjust="spacingAndGlyphs"  stroke="#4c586c" stroke-width="0.36">ByLayer</text>
<rect x="1779" y="171.8" width="96" height="2.2" fill="#f4f4f4" />
<text x="1878.5" y="179.9" font-family="'Liberation Sans', sans-serif" font-size="18" fill="#f8f8f8" font-weight="normal" font-style="normal" text-anchor="start" textLength="59.8" lengthAdjust="spacingAndGlyphs"  stroke="#4c586c" stroke-width="0.36">ByLayer</text>
<polygon points="2023,98 2034.8,98 2028.9,104" fill="#d9d9d9" stroke="none" stroke-width="1" />
<polygon points="2025,134 2036.8,134 2030.9,140" fill="#d9d9d9" stroke="none" stroke-width="1" />
<polygon points="2025,170 2036.8,170 2030.9,176" fill="#d9d9d9" stroke="none" stroke-width="1" />
<text x="1784.4" y="217.8" font-family="'Liberation Sans', sans-serif" font-size="18" fill="#f8f8f8" font-weight="normal" font-style="normal" text-anchor="start" textLength="79.5" lengthAdjust="spacingAndGlyphs"  stroke="#3b4453" stroke-width="0.36">Properties</text>
<polygon points="1873,207.2 1885,207.2 1879,213.2" fill="#d9d9d9" stroke="none" stroke-width="1" />
<line x1="2027.5" y1="207.2" x2="2033.5" y2="213.2" stroke="#dcdcdc" stroke-width="1.6" />
<path d="M2034.5 208.2 V214.2 H2028.5" fill="none" stroke="#dcdcdc" stroke-width="1.7" />
<path d="M2059.7 96.7 H2054.7 V135.5 H2059.7" fill="none" stroke="#f4f4f4" stroke-width="1.4" />
<path d="M2081 135.5 H2086.3 V114" fill="none" stroke="#f4f4f4" stroke-width="1.4" />
<rect x="2063.5" y="101.5" width="14.5" height="11" fill="#466a90" stroke="#7cc6fb" stroke-width="1.3"/>
<circle cx="2070.3" cy="124.6" r="7.3" fill="#666e7c" stroke="#dcdcdc" stroke-width="1.2" />
<polygon points="2088.5,88.7 2090.26,96.85 2097.27,92.33 2092.75,99.34 2100.9,101.1 2092.75,102.86 2097.27,109.87 2090.26,105.35 2088.5,113.5 2086.74,105.35 2079.73,109.87 2084.25,102.86 2076.1,101.1 2084.25,99.34 2079.73,92.33 2086.74,96.85" fill="#fdd27a" stroke="none" stroke-width="1" />
<text x="2051.6" y="160.8" font-family="'Liberation Sans', sans-serif" font-size="18" fill="#f8f8f8" font-weight="normal" font-style="normal" text-anchor="start" textLength="50.3" lengthAdjust="spacingAndGlyphs"  stroke="#3b4453" stroke-width="0.36">Group</text>
<rect x="2116.5" y="92.5" width="8" height="7" fill="#466a90" stroke="#7cc6fb" stroke-width="1.1"/>
<circle cx="2120.5" cy="105.5" r="4.2" fill="#666e7c" stroke="#dcdcdc" stroke-width="1.1" />
<path d="M2128.2 89.5 H2131.7 V112.5 H2128.2" fill="none" stroke="#f4f4f4" stroke-width="1.4" />
<rect x="2129.5" y="97" width="5" height="9.5" fill="#3b4453" />
<line x1="2128.5" y1="98.5" x2="2135.5" y2="105.5" stroke="#f25a5a" stroke-width="2.2" />
<line x1="2135.5" y1="98.5" x2="2128.5" y2="105.5" stroke="#f25a5a" stroke-width="2.2" />
<path d="M2116.5 125.5 H2113.5 V145.5 H2116.5" fill="none" stroke="#f4f4f4" stroke-width="1.4" />
<path d="M2124.5 125.5 H2127.5 V145.5 H2124.5" fill="none" stroke="#f4f4f4" stroke-width="1.4" />
<rect x="2117.3" y="128.5" width="6.4" height="5" fill="#466a90" stroke="#7cc6fb" stroke-width="1.1"/>
<circle cx="2120.5" cy="139.5" r="3.4" fill="#666e7c" stroke="#dcdcdc" stroke-width="1.1" />
<g transform="translate(2125,149) scale(1)">
<path d="M0 0 L1.1 -4.5 L7.4 -10.8 L10.8 -7.4 L4.5 -1.1 Z" fill="#f7cb6c" stroke="none" stroke-width="1" />
<path d="M7.4 -10.8 L9 -12.4 Q11.6 -13.4 12.9 -11.2 Q13.2 -9.8 12.4 -9 L10.8 -7.4 Z" fill="#f25a5e" stroke="none" stroke-width="1" />
<path d="M0 0 L1.1 -4.5 L4.5 -1.1 Z" fill="#cfcfcf" stroke="none" stroke-width="1" />
</g>
<rect x="2106.8" y="155.8" width="34.6" height="31.4" fill="#465b75" stroke="#6cbdf2" stroke-width="1.6"/>
<path d="M2118.5 161.5 H2115.5 V181.5 H2118.5" fill="none" stroke="#f4f4f4" stroke-width="1.4" />
<path d="M2126.5 161.5 H2129.5 V170.4 H2126.5" fill="none" stroke="#f4f4f4" stroke-width="1.4" />
<rect x="2119.3" y="164.5" width="6.6" height="5" fill="#4a8068" stroke="#5fd880" stroke-width="1.1"/>
<circle cx="2122.5" cy="175.6" r="3.4" fill="#4a8068" stroke="#5fd880" stroke-width="1.1" />
<g transform="translate(2127.8,172) scale(0.95)">
<path d="M0 0 L0 12.5 L3 9.8 L5.2 14.6 L7.4 13.6 L5.2 8.9 L9.2 8.6 Z" fill="#f6f6f6" stroke="#3b4453" stroke-width="0.6" />
</g>
<text x="2056.6" y="218" font-family="'Liberation Sans', sans-serif" font-size="18" fill="#f8f8f8" font-weight="normal" font-style="normal" text-anchor="start" textLength="58.6" lengthAdjust="spacingAndGlyphs"  stroke="#3b4453" stroke-width="0.36">Groups</text>
<polygon points="2124,207 2136,207 2130,213" fill="#d9d9d9" stroke="none" stroke-width="1" />
<rect x="2179.8" y="106.8" width="42.5" height="10" fill="#fdd27a" />
<rect x="2183.3" y="106.8" width="1" height="4.2" fill="#8a7a50" />
<rect x="2187.8" y="106.8" width="1" height="2.8" fill="#8a7a50" />
<rect x="2192.3" y="106.8" width="1" height="4.2" fill="#8a7a50" />
<rect x="2196.8" y="106.8" width="1" height="2.8" fill="#8a7a50" />
<rect x="2201.3" y="106.8" width="1" height="4.2" fill="#8a7a50" />
<rect x="2205.8" y="106.8" width="1" height="2.8" fill="#8a7a50" />
<rect x="2210.3" y="106.8" width="1" height="4.2" fill="#8a7a50" />
<rect x="2214.8" y="106.8" width="1" height="2.8" fill="#8a7a50" />
<rect x="2219.3" y="106.8" width="1" height="4.2" fill="#8a7a50" />
<text x="2167.2" y="160.8" font-family="'Liberation Sans', sans-serif" font-size="18" fill="#f8f8f8" font-weight="normal" font-style="normal" text-anchor="start" textLength="67.6" lengthAdjust="spacingAndGlyphs"  stroke="#3b4453" stroke-width="0.36">Measure</text>
<polygon points="2196.8,170.95 2204.8,170.95 2200.8,175.45" fill="#d9d9d9" stroke="none" stroke-width="1" />
<polygon points="2270.7,89 2262.5,95.1 2266.8,95.8 2264.6,100.4 2273.6,94.7 2268.9,94" fill="#fdd27a" stroke="none" stroke-width="1" />
<rect x="2269" y="99" width="14" height="14" fill="#f4f4f4" />
<rect x="2272" y="102.3" width="1.6" height="1.6" fill="#2a7de0" />
<rect x="2275" y="102.4" width="6" height="1.3" fill="#2a7de0" />
<rect x="2272" y="105.8" width="1.6" height="1.6" fill="#2a7de0" />
<rect x="2275" y="105.9" width="6" height="1.3" fill="#2a7de0" />
<rect x="2272" y="109.3" width="1.6" height="1.6" fill="#2a7de0" />
<rect x="2275" y="109.4" width="6" height="1.3" fill="#2a7de0" />
<g transform="translate(2258.8,96) scale(1.12)">
<path d="M0 0 L0 12.5 L3 9.8 L5.2 14.6 L7.4 13.6 L5.2 8.9 L9.2 8.6 Z" fill="#f6f6f6" stroke="#3b4453" stroke-width="0.6" />
</g>
<rect x="2259.7" y="125.8" width="21" height="20.4" fill="none" stroke="#5fd880" stroke-width="1.2" stroke-dasharray="2.4 1.4"/>
<rect x="2262.5" y="132.5" width="11" height="11" fill="#7cd6a0" />
<rect x="2266.5" y="128.5" width="11.5" height="11" fill="#7cd6a0" stroke="#3b4453" stroke-width="1"/>
<g transform="translate(2274,135.5) scale(0.95)">
<path d="M0 0 L0 12.5 L3 9.8 L5.2 14.6 L7.4 13.6 L5.2 8.9 L9.2 8.6 Z" fill="#f6f6f6" stroke="#3b4453" stroke-width="0.6" />
</g>
<rect x="2262" y="161" width="17" height="24" fill="#dcdcdc" />
<rect x="2265" y="164.5" width="11" height="4.5" fill="#555" />
<rect x="2265" y="171.5" width="2.7" height="2.6" fill="#555" />
<rect x="2269.2" y="171.5" width="2.7" height="2.6" fill="#555" />
<rect x="2273.4" y="171.5" width="2.7" height="2.6" fill="#555" />
<rect x="2265" y="175.5" width="2.7" height="2.6" fill="#555" />
<rect x="2269.2" y="175.5" width="2.7" height="2.6" fill="#555" />
<rect x="2273.4" y="175.5" width="2.7" height="2.6" fill="#555" />
<rect x="2265" y="179.5" width="2.7" height="2.6" fill="#555" />
<rect x="2269.2" y="179.5" width="2.7" height="2.6" fill="#555" />
<rect x="2273.4" y="179.5" width="2.7" height="2.6" fill="#555" />
<text x="2182.3" y="218" font-family="'Liberation Sans', sans-serif" font-size="18" fill="#f8f8f8" font-weight="normal" font-style="normal" text-anchor="start" textLength="56.7" lengthAdjust="spacingAndGlyphs"  stroke="#3b4453" stroke-width="0.36">Utilities</text>
<polygon points="2248,207 2260,207 2254,213" fill="#d9d9d9" stroke="none" stroke-width="1" />
<rect x="2315" y="92.8" width="33" height="37" fill="#deb07a" />
<path d="M2322.5 94.4 V92.3 Q2322.5 90.8 2324 90.8 H2326.8 V89 Q2326.8 87.9 2328 87.9 H2333.8 Q2335 87.9 2335 89 V90.8 H2337.8 Q2339.3 90.8 2339.3 92.3 V94.4 Z" fill="#fafafa" stroke="#3b4453" stroke-width="0.6" />
<path d="M2326 103 H2344 L2353 112 V136 H2326 Z" fill="#dcdcdc" stroke="#3b4453" stroke-width="1" />
<path d="M2344 103 L2353 112 H2344 Z" fill="#f4f4f4" stroke="#3b4453" stroke-width="0.8" />
<text x="2313.4" y="161" font-family="'Liberation Sans', sans-serif" font-size="18" fill="#f8f8f8" font-weight="normal" font-style="normal" text-anchor="start" textLength="41.1" lengthAdjust="spacingAndGlyphs"  stroke="#3b4453" stroke-width="0.36">Paste</text>
<polygon points="2328.8,170.75 2336.8,170.75 2332.8,175.25" fill="#d9d9d9" stroke="none" stroke-width="1" />
<rect x="2379" y="89" width="18" height="21" fill="#dcdcdc" />
<line x1="2382" y1="93.3" x2="2393.5" y2="93.3" stroke="#777" stroke-width="1" />
<line x1="2382" y1="99.3" x2="2393.5" y2="99.3" stroke="#777" stroke-width="1" />
<line x1="2382" y1="105.3" x2="2393.5" y2="105.3" stroke="#777" stroke-width="1" />
<path d="M2389.6 96.8 L2399.2 109 M2402.8 98.6 L2394 109" fill="none" stroke="#fafafa" stroke-width="2.4" />
<circle cx="2393.2" cy="110" r="2.3" fill="#3b4453" stroke="#fafafa" stroke-width="1.7" />
<circle cx="2400" cy="110" r="2.3" fill="#3b4453" stroke="#fafafa" stroke-width="1.7" />
<polygon points="2409.8,97.75 2417.8,97.75 2413.8,102.25" fill="#d9d9d9" stroke="none" stroke-width="1" />
<path d="M2382 125 H2391 L2395 129 V144.5 H2382 Z" fill="#dcdcdc" stroke="none" stroke-width="1" />
<path d="M2386 129.5 H2396 L2401 134.5 V149 H2386 Z" fill="#dcdcdc" stroke="#3b4453" stroke-width="1" />
<path d="M2396 129.5 L2401 134.5 H2396 Z" fill="#f4f4f4" stroke="#3b4453" stroke-width="0.7" />
<polygon points="2409.8,133.95 2417.8,133.95 2413.8,138.45" fill="#d9d9d9" stroke="none" stroke-width="1" />
<text x="2321.6" y="218" font-family="'Liberation Sans', sans-serif" font-size="18" fill="#f8f8f8" font-weight="normal" font-style="normal" text-anchor="start" textLength="78.4" lengthAdjust="spacingAndGlyphs"  stroke="#3b4453" stroke-width="0.36">Clipboard</text>
<path d="M2453 92.8 H2474 V107.8 H2501 V129 H2453 Z" fill="#dcdcdc" stroke="none" stroke-width="1" />
<text x="2459.4" y="160" font-family="'Liberation Sans', sans-serif" font-size="18" fill="#f8f8f8" font-weight="normal" font-style="normal" text-anchor="start" textLength="36.1" lengthAdjust="spacingAndGlyphs"  stroke="#3b4453" stroke-width="0.36">Base</text>
<polygon points="2472.8,169.95 2480.8,169.95 2476.8,174.45" fill="#d9d9d9" stroke="none" stroke-width="1" />
<text x="2437.6" y="218" font-family="'Liberation Sans', sans-serif" font-size="18" fill="#f8f8f8" font-weight="normal" font-style="normal" text-anchor="start" textLength="37.9" lengthAdjust="spacingAndGlyphs"  stroke="#3b4453" stroke-width="0.36">View</text>
<polygon points="2484,207 2496,207 2490,213" fill="#d9d9d9" stroke="none" stroke-width="1" />
<line x1="2509.5" y1="206.5" x2="2515.5" y2="212.5" stroke="#dcdcdc" stroke-width="1.6" />
<path d="M2516.5 207.5 V213.5 H2510.5" fill="none" stroke="#dcdcdc" stroke-width="1.7" />
<rect x="511" y="575" width="523" height="1" fill="#dc0808" shape-rendering="crispEdges"/>
<rect x="511" y="1097" width="523" height="1" fill="#dc0808" shape-rendering="crispEdges"/>
<rect x="511" y="575" width="1" height="523" fill="#dc0808" shape-rendering="crispEdges"/>
<rect x="1033" y="575" width="1" height="523" fill="#dc0808" shape-rendering="crispEdges"/>
<rect x="511" y="1023" width="1" height="75" fill="#f0e4e4" shape-rendering="crispEdges"/>
<rect x="511" y="1097" width="76" height="1" fill="#f0c8c8" shape-rendering="crispEdges"/>
<rect x="505.5" y="1091.5" width="13" height="13" fill="none" stroke="#f2f2f2" stroke-width="1" shape-rendering="crispEdges"/>
<path d="M513.5 999.5 L522.3 1008.5 L531 999.5 M522.3 1008.5 V1017.5" fill="none" stroke="#f0f0f0" stroke-width="1.2" />
<path d="M591.5 1078 L609.5 1095.5 M609.5 1078 L591.5 1095.5" fill="none" stroke="#f0f0f0" stroke-width="1.2" />
<rect x="1184" y="1012" width="1" height="129" fill="#e414e4" shape-rendering="crispEdges"/>
<rect x="1120" y="1076" width="129" height="1" fill="#e414e4" shape-rendering="crispEdges"/>
<rect x="1181" y="1073" width="7" height="7" fill="#212830" shape-rendering="crispEdges"/>
<rect x="1180.5" y="1072.5" width="8" height="8" fill="none" stroke="#e414e4" stroke-width="1" shape-rendering="crispEdges"/>
<rect x="2462.5" y="291.8" width="18" height="6.6" fill="#14171d" />
<rect x="2464" y="293" width="15" height="4.1" fill="#f4f4f4" />
<rect x="2495.6" y="282.8" width="14.6" height="14.4" fill="#14171d" />
<rect x="2497" y="284" width="12.1" height="12.1" fill="#f4f4f4" />
<rect x="2492.8" y="285.8" width="14.4" height="14.4" fill="#14171d" />
<rect x="2494" y="287" width="12" height="12" fill="#f4f4f4" />
<rect x="2497.1" y="290.1" width="5.7" height="5.7" fill="#1a1e26" />
<path d="M2526.4 287.3 L2534.8 295.2 M2534.8 287.3 L2526.4 295.2" fill="none" stroke="#14171d" stroke-width="5.2" stroke-linecap="square"/>
<path d="M2526.5 287.4 L2534.7 295.1 M2534.7 287.4 L2526.5 295.1" fill="none" stroke="#f6f6f6" stroke-width="2.9" stroke-linecap="square"/>
<circle cx="2428" cy="428.4" r="80.4" fill="none" stroke="#434a55" stroke-width="20" />
<rect x="2389" y="389.5" width="78" height="77.5" fill="#a9acb0" />
<rect x="2404" y="404" width="48" height="48" fill="#a0a3ad" />
<text x="2411.51" y="436.2" font-family="'Liberation Sans', sans-serif" font-size="22" fill="#4e5560" font-weight="bold" font-style="normal" text-anchor="start" textLength="33.8" lengthAdjust="spacingAndGlyphs" >TOP</text>
<text x="2428" y="355.8" font-family="'Liberation Sans', sans-serif" font-size="33" fill="#a8a9ac" font-weight="bold" font-style="normal" text-anchor="middle" >N</text>
<text x="2428" y="525" font-family="'Liberation Sans', sans-serif" font-size="33" fill="#a8a9ac" font-weight="bold" font-style="normal" text-anchor="middle" >S</text>
<text x="2327.07" y="440.3" font-family="'Liberation Sans', sans-serif" font-size="33" fill="#a8a9ac" font-weight="bold" font-style="normal" text-anchor="start" textLength="32.65" lengthAdjust="spacingAndGlyphs" >W</text>
<text x="2502.77" y="440.3" font-family="'Liberation Sans', sans-serif" font-size="33" fill="#a8a9ac" font-weight="bold" font-style="normal" text-anchor="start" textLength="20.35" lengthAdjust="spacingAndGlyphs" >E</text>
<rect x="2394" y="558.5" width="69" height="25" fill="#8f90a0" rx="4" stroke="#a2a3b0" stroke-width="1"/>
<text x="2400.16" y="575.8" font-family="'Liberation Sans', sans-serif" font-size="15.5" fill="#585d6a" font-weight="normal" font-style="normal" text-anchor="start" textLength="35.27" lengthAdjust="spacingAndGlyphs" >WCS</text>
<path d="M2445 567 H2456.5 L2450.7 574.5 Z" fill="#9fa0ae" stroke="#b6b7c2" stroke-width="1" />
<rect x="2502" y="617" width="46" height="311.5" fill="#5a5e64" rx="3"/>
<rect x="2504" y="617" width="42" height="1.4" fill="#6c7076" />
<rect x="2502" y="619" width="1" height="307" fill="#666a70" />
<circle cx="2539" cy="625.5" r="4.6" fill="none" stroke="#4c5159" stroke-width="1.4" />
<path d="M2536.5 623 L2541.5 628 M2541.5 623 L2536.5 628" fill="none" stroke="#4c5159" stroke-width="1.2" />
<circle cx="2539" cy="918.5" r="4.6" fill="none" stroke="#4c5159" stroke-width="1.4" />
<rect x="2536" y="917.8" width="6" height="2" fill="#4c5159" />
<path d="M2509.5 660 Q2509.5 643 2525 643 H2541.5 V660 Q2541.5 676 2525.5 676 Q2509.5 676 2509.5 660 Z" fill="none" stroke="#4c5159" stroke-width="2" />
<circle cx="2525.3" cy="658.6" r="9.3" fill="#5e636b" stroke="#4c5159" stroke-width="1.8" />
<line x1="2518.7" y1="665.2" x2="2513.6" y2="670.4" stroke="#4c5159" stroke-width="1.6" />
<line x1="2531.9" y1="665.2" x2="2537" y2="670.4" stroke="#4c5159" stroke-width="1.6" />
<polygon points="2522,686 2529,686 2525.5,690" fill="#4c5159" stroke="none" stroke-width="1" />
<line x1="2506" y1="699.5" x2="2545" y2="699.5" stroke="#545960" stroke-width="1" />
<g transform="translate(-1.3,-1.4)">
<path d="M2512 724 Q2508.5 722.5 2510 726.5 L2518 738 Q2521 741 2526 741 H2531 Q2538 741 2539.5 733 L2541.5 716 Q2541 712.5 2538.5 714.5 L2537 724 L2536.5 711 Q2535 707.5 2533 710.5 L2532 723 L2530.5 709.5 Q2528.5 706.5 2526.5 709.5 L2526.5 723.5 L2524 712.5 Q2522 709.5 2520.5 713 L2521.5 731 Z" fill="none" stroke="#4c5159" stroke-width="1.8" />
</g>
<path d="M2508 748.5 L2529 769 M2530 748.5 L2508 769.5" fill="none" stroke="#4c5159" stroke-width="1.8" />
<polygon points="2506.6,747.2 2512.6,747.2 2506.6,753.2" fill="#4c5159" stroke="none" stroke-width="1" />
<polygon points="2531.6,747.2 2525.6,747.2 2531.6,753.2" fill="#4c5159" stroke="none" stroke-width="1" />
<polygon points="2506.6,770.6 2512.6,770.6 2506.6,764.6" fill="#4c5159" stroke="none" stroke-width="1" />
<circle cx="2531.2" cy="768.8" r="6.5" fill="#5e626a" stroke="#4c5159" stroke-width="1.8" />
<line x1="2536" y1="773.6" x2="2543" y2="781" stroke="#4c5159" stroke-width="3" />
<polygon points="2522,791.5 2529,791.5 2525.5,795.5" fill="#4c5159" stroke="none" stroke-width="1" />
<ellipse cx="2524.5" cy="824.5" rx="16" ry="5.6" fill="none" stroke="#4c5159" stroke-width="1.8" />
<path d="M2521.6 837 V811.5 H2518.8 L2524.8 805 L2530.8 811.5 H2528 V837 Z" fill="#5a5e64" stroke="#4c5159" stroke-width="1.6" />
<polygon points="2512,827 2518,822.5 2518,832" fill="#4c5159" stroke="none" stroke-width="1" />
<polygon points="2522,849 2529,849 2525.5,853" fill="#4c5159" stroke="none" stroke-width="1" />
<line x1="2506" y1="861.5" x2="2545" y2="861.5" stroke="#545960" stroke-width="1" />
<rect x="2508" y="869" width="8.5" height="7.5" fill="none" stroke="#4c5159" stroke-width="1.4" />
<rect x="2520.5" y="869" width="8.5" height="7.5" fill="none" stroke="#4c5159" stroke-width="1.4" />
<rect x="2533" y="869" width="8.5" height="7.5" fill="none" stroke="#4c5159" stroke-width="1.4" />
<rect x="2508" y="881.5" width="24" height="18.5" fill="none" stroke="#4c5159" stroke-width="1.8" />
<polygon points="2515.5,885.5 2524.5,891 2515.5,896.5" fill="#4c5159" stroke="none" stroke-width="1" />
<rect x="546" y="1204" width="38" height="229" fill="#2b323e" rx="3"/>
<rect x="583" y="1204" width="1462" height="197" fill="#98999b" />
<rect x="583" y="1401" width="1462" height="2.5" fill="#2b3038" />
<rect x="584" y="1403.5" width="1461" height="28.5" fill="#bfc0c2" />
<text x="587.4" y="1231.3" font-family="'Liberation Mono', monospace" font-size="18.7" fill="#080808" font-weight="normal" font-style="normal" text-anchor="start" textLength="109.7" lengthAdjust="spacingAndGlyphs" stroke="#080808" stroke-width="0.3">Command: L</text>
<text x="587.4" y="1254.3" font-family="'Liberation Mono', monospace" font-size="18.7" fill="#080808" font-weight="normal" font-style="normal" text-anchor="start" textLength="43.88" lengthAdjust="spacingAndGlyphs" stroke="#080808" stroke-width="0.3">LINE</text>
<text x="587.4" y="1277.3" font-family="'Liberation Mono', monospace" font-size="18.7" fill="#080808" font-weight="normal" font-style="normal" text-anchor="start" textLength="263.28" lengthAdjust="spacingAndGlyphs" stroke="#080808" stroke-width="0.3">Specify first point: 0,0</text>
<text x="587.4" y="1300.3" font-family="'Liberation Mono', monospace" font-size="18.7" fill="#080808" font-weight="normal" font-style="normal" text-anchor="start" textLength="362.01" lengthAdjust="spacingAndGlyphs" stroke="#080808" stroke-width="0.3">Specify next point or [Undo]: 1,0</text>
<text x="587.4" y="1323.3" font-family="'Liberation Mono', monospace" font-size="18.7" fill="#080808" font-weight="normal" font-style="normal" text-anchor="start" textLength="362.01" lengthAdjust="spacingAndGlyphs" stroke="#080808" stroke-width="0.3">Specify next point or [Undo]: 1,1</text>
<text x="587.4" y="1346.3" font-family="'Liberation Mono', monospace" font-size="18.7" fill="#080808" font-weight="normal" font-style="normal" text-anchor="start" textLength="427.83" lengthAdjust="spacingAndGlyphs" stroke="#080808" stroke-width="0.3">Specify next point or [Close/Undo]: 0,1</text>
<text x="587.4" y="1369.3" font-family="'Liberation Mono', monospace" font-size="18.7" fill="#080808" font-weight="normal" font-style="normal" text-anchor="start" textLength="427.83" lengthAdjust="spacingAndGlyphs" stroke="#080808" stroke-width="0.3">Specify next point or [Close/Undo]: 0,0</text>
<text x="587.4" y="1392.3" font-family="'Liberation Mono', monospace" font-size="18.7" fill="#080808" font-weight="normal" font-style="normal" text-anchor="start" textLength="482.68" lengthAdjust="spacingAndGlyphs" stroke="#080808" stroke-width="0.3">Specify next point or [Close/Undo]: *Cancel*</text>
<text x="638.6" y="1424" font-family="'Liberation Mono', monospace" font-size="18.7" fill="#6c6d72" font-weight="normal" font-style="italic" text-anchor="start" textLength="153" lengthAdjust="spacingAndGlyphs" >Type a command</text>
<rect x="551.8" y="1210.8" width="2" height="1.6" fill="#c8c8c8" />
<rect x="556.5" y="1210.8" width="2" height="1.6" fill="#c8c8c8" />
<rect x="561.2" y="1210.8" width="2" height="1.6" fill="#c8c8c8" />
<rect x="565.9" y="1210.8" width="2" height="1.6" fill="#c8c8c8" />
<rect x="570.6" y="1210.8" width="2" height="1.6" fill="#c8c8c8" />
<rect x="575.3" y="1210.8" width="2" height="1.6" fill="#c8c8c8" />
<path d="M557.5 1232 L570.5 1244.5 M570.5 1232 L557.5 1244.5" fill="none" stroke="#d4d4d4" stroke-width="2.6" />
<path d="M554.5 1283 L567 1270.5" fill="none" stroke="#c8c8c8" stroke-width="3.6" stroke-linecap="round"/>
<path d="M572.5 1262.5 Q566 1262 565.5 1268 Q565.8 1272.5 570 1273.5 Q574.5 1273 575.5 1268.5 L571.5 1270 L569 1267.5 Z" fill="#c8c8c8" stroke="none" stroke-width="1" />
<rect x="590.6" y="1410.4" width="22.6" height="17" fill="#bcbdbf" stroke="#55585e" stroke-width="1.2"/>
<rect x="590" y="1409.8" width="23.8" height="4.6" fill="#55585e" />
<text x="591.6" y="1423.6" font-family="'Liberation Mono', monospace" font-size="12" fill="#44464a" font-weight="normal" font-style="normal" text-anchor="start" textLength="12.5" lengthAdjust="spacingAndGlyphs" >&gt;_</text>
<polygon points="617.6,1416 629,1416 623.3,1422" fill="#55585e" stroke="none" stroke-width="1" />
<polygon points="2028.5,1421 2039,1421 2033.7,1415" fill="#55585e" stroke="none" stroke-width="1" />
<text x="1609.8" y="1510.7" font-family="'Liberation Sans', sans-serif" font-size="18" fill="#f4f4f4" font-weight="normal" font-style="normal" text-anchor="start" textLength="61.7" lengthAdjust="spacingAndGlyphs"  stroke="#3b4453" stroke-width="0.36">MODEL</text>
<line x1="1693.8" y1="1491.8" x2="1693.8" y2="1515" stroke="#dcdcdc" stroke-width="1.3" />
<line x1="1699.7" y1="1491.8" x2="1699.7" y2="1515" stroke="#dcdcdc" stroke-width="1.3" />
<line x1="1705.5" y1="1491.8" x2="1705.5" y2="1515" stroke="#dcdcdc" stroke-width="1.3" />
<line x1="1688" y1="1497.7" x2="1711.2" y2="1497.7" stroke="#dcdcdc" stroke-width="1.3" />
<line x1="1688" y1="1503.6" x2="1711.2" y2="1503.6" stroke="#dcdcdc" stroke-width="1.3" />
<line x1="1688" y1="1509.4" x2="1711.2" y2="1509.4" stroke="#dcdcdc" stroke-width="1.3" />
<rect x="1726.9" y="1495.2" width="2.9" height="2.9" fill="#dcdcdc" />
<rect x="1726.9" y="1502.2" width="2.9" height="2.9" fill="#dcdcdc" />
<rect x="1726.9" y="1509" width="2.9" height="2.9" fill="#dcdcdc" />
<rect x="1734" y="1495.2" width="2.9" height="2.9" fill="#dcdcdc" />
<rect x="1734" y="1502.2" width="2.9" height="2.9" fill="#dcdcdc" />
<rect x="1734" y="1509" width="2.9" height="2.9" fill="#dcdcdc" />
<rect x="1741.2" y="1495.2" width="2.9" height="2.9" fill="#dcdcdc" />
<rect x="1741.2" y="1502.2" width="2.9" height="2.9" fill="#dcdcdc" />
<rect x="1741.2" y="1509" width="2.9" height="2.9" fill="#dcdcdc" />
<polygon points="1759.9,1501.2 1772,1501.2 1765.95,1507.5" fill="#d9d9d9" stroke="none" stroke-width="1" />
<line x1="1790" y1="1500.4" x2="1801" y2="1500.4" stroke="#dcdcdc" stroke-width="1.4" />
<line x1="1795.5" y1="1495" x2="1795.5" y2="1506" stroke="#dcdcdc" stroke-width="1.4" />
<rect x="1799" y="1507" width="15" height="6.2" fill="#dcdcdc" />
<rect x="1800.3" y="1508.2" width="1.8" height="3.8" fill="#3a3f48" />
<path d="M1828.5 1491.8 V1515.7 H1852" fill="none" stroke="#dcdcdc" stroke-width="1.4" />
<path d="M1828.5 1509.2 H1835 V1515.7" fill="none" stroke="#dcdcdc" stroke-width="1.3" />
<circle cx="1873.6" cy="1504.3" r="9.8" fill="none" stroke="#ffffff" stroke-width="1.4" />
<line x1="1873.4" y1="1504.3" x2="1888.2" y2="1504.3" stroke="#ffffff" stroke-width="1.4" />
<line x1="1874" y1="1504.3" x2="1884" y2="1494" stroke="#ffffff" stroke-width="1.4" />
<polygon points="1899.7,1501.2 1911.8,1501.2 1905.75,1507.5" fill="#d9d9d9" stroke="none" stroke-width="1" />
<line x1="1936.1" y1="1491.8" x2="1936.1" y2="1514" stroke="#4fd070" stroke-width="1.1" />
<line x1="1927" y1="1494" x2="1945" y2="1512.2" stroke="#f06060" stroke-width="1.1" />
<rect x="1934" y="1501" width="4.2" height="4.2" fill="#3b4453" stroke="#f4f4f4" stroke-width="1"/>
<polygon points="1959.7,1501.2 1972,1501.2 1965.85,1507.5" fill="#d9d9d9" stroke="none" stroke-width="1" />
<line x1="1986.2" y1="1512.5" x2="2010" y2="1512.5" stroke="#ffffff" stroke-width="1.4" />
<line x1="1986.2" y1="1512.5" x2="2003.8" y2="1495.4" stroke="#ffffff" stroke-width="1.4" />
<rect x="1992.8" y="1502" width="4.2" height="4.2" fill="#ffffff" />
<rect x="2025" y="1495.2" width="20.9" height="20.5" fill="none" stroke="#ffffff" stroke-width="1.4" />
<rect x="2022.1" y="1492.3" width="6.8" height="6.5" fill="#5b8cc0" stroke="#ffffff" stroke-width="1.2"/>
<polygon points="2058,1501.2 2070,1501.2 2064,1507.5" fill="#d9d9d9" stroke="none" stroke-width="1" />
<polygon points="2098.5,1492 2102.6,1502.6 2101.5,1503.6 2101.1,1504.8 2101.7,1506.2 2104.2,1506.9 2109,1516.1 2100.7,1512.7 2099.7,1510.5 2098.5,1509.9 2097.3,1510.5 2096.3,1512.7 2088,1516.1 2092.8,1506.9 2095.3,1506.2 2095.9,1504.8 2095.5,1503.6 2094.4,1502.6" fill="#ffffff" stroke="none" stroke-width="1" />
<circle cx="2107.6" cy="1497.4" r="3.9" fill="none" stroke="#ffffff" stroke-width="1.3" />
<polygon points="2134.4,1492 2138.5,1502.6 2137.4,1503.6 2137,1504.8 2137.6,1506.2 2140.1,1506.9 2144.9,1516.1 2136.6,1512.7 2135.6,1510.5 2134.4,1509.9 2133.2,1510.5 2132.2,1512.7 2123.9,1516.1 2128.7,1506.9 2131.2,1506.2 2131.8,1504.8 2131.4,1503.6 2130.3,1502.6" fill="#dcdcdc" stroke="none" stroke-width="1" />
<polygon points="2145.6,1492.2 2139.4,1498 2142,1498.6 2140,1503.7 2146.9,1498.2 2144,1497.3" fill="#dcdcdc" stroke="none" stroke-width="1" />
<polygon points="2171.5,1492 2175.6,1502.6 2174.5,1503.6 2174.1,1504.8 2174.7,1506.2 2177.2,1506.9 2182,1516.1 2173.7,1512.7 2172.7,1510.5 2171.5,1509.9 2170.3,1510.5 2169.3,1512.7 2161,1516.1 2165.8,1506.9 2168.3,1506.2 2168.9,1504.8 2168.5,1503.6 2167.4,1502.6" fill="#dcdcdc" stroke="none" stroke-width="1" />
<text x="2197.6" y="1510.7" font-family="'Liberation Sans', sans-serif" font-size="18" fill="#f4f4f4" font-weight="bold" font-style="normal" text-anchor="start" textLength="18.3" lengthAdjust="spacingAndGlyphs" >1:1</text>
<polygon points="2222,1501.2 2234.2,1501.2 2228.1,1507.5" fill="#d9d9d9" stroke="none" stroke-width="1" />
<polygon points="2275.96,1501.48 2275.96,1506.32 2272.35,1506.67 2271.86,1507.85 2274.17,1510.64 2270.74,1514.07 2267.95,1511.76 2266.77,1512.25 2266.42,1515.86 2261.58,1515.86 2261.23,1512.25 2260.05,1511.76 2257.26,1514.07 2253.83,1510.64 2256.14,1507.85 2255.65,1506.67 2252.04,1506.32 2252.04,1501.48 2255.65,1501.13 2256.14,1499.95 2253.83,1497.16 2257.26,1493.73 2260.05,1496.04 2261.23,1495.55 2261.58,1491.94 2266.42,1491.94 2266.77,1495.55 2267.95,1496.04 2270.74,1493.73 2274.17,1497.16 2271.86,1499.95 2272.35,1501.13" fill="#dcdcdc" stroke="none" stroke-width="1" />
<circle cx="2264" cy="1503.9" r="4.2" fill="#3b4453" stroke="none" stroke-width="1" />
<polygon points="2287.6,1501.2 2299.8,1501.2 2293.7,1507.5" fill="#d9d9d9" stroke="none" stroke-width="1" />
<rect x="2313.9" y="1502.4" width="23" height="3" fill="#dcdcdc" />
<rect x="2323.9" y="1492.4" width="3" height="23" fill="#dcdcdc" />
<rect x="2356.5" y="1492.7" width="9" height="9" fill="none" stroke="#dcdcdc" stroke-width="1.3" />
<circle cx="2374.5" cy="1502.4" r="5.2" fill="none" stroke="#dcdcdc" stroke-width="1.3" />
<polygon points="2365.4,1507 2370.6,1515.3 2360.2,1515.3" fill="none" stroke="#dcdcdc" stroke-width="1.3" />
<path d="M2394.1 1486 H2415 L2424 1493.5 V1512 H2394.1 Z" fill="#3268a8" stroke="none" stroke-width="1" />
<path d="M2415 1486 L2424 1493.5 H2415 Z" fill="#7fa4d0" stroke="none" stroke-width="1" />
<line x1="2401.8" y1="1486" x2="2401.8" y2="1507" stroke="#e4ecf6" stroke-width="1.6" />
<line x1="2394.1" y1="1493.5" x2="2413" y2="1493.5" stroke="#e4ecf6" stroke-width="1.6" />
<circle cx="2401.8" cy="1493.5" r="2.6" fill="#3268a8" stroke="#e4ecf6" stroke-width="1.5" />
<path d="M2394.1 1507.5 Q2402 1505 2409.6 1508 L2407 1512 L2410 1517.5 H2394.1 Z" fill="#f7b71c" stroke="none" stroke-width="1" />
<path d="M2408.6 1513.2 L2416.2 1519.6 L2428.8 1506.4" fill="none" stroke="#44b058" stroke-width="4.2" />
<path d="M2443.2 1499.5 A10.4 10.4 0 1 1 2461 1510" fill="none" stroke="#dcdcdc" stroke-width="1.5" />
<polygon points="2441,1494 2447.5,1498.5 2441.8,1502.3" fill="#dcdcdc" stroke="none" stroke-width="1" />
<path d="M2452.5 1496 V1503.5 H2457.5" fill="none" stroke="#dcdcdc" stroke-width="1.4" />
<path d="M2440.2 1502.4 H2448.5 L2451.8 1505.4 V1515.6 H2440.2 Z" fill="#2c5fa0" stroke="#e8eef6" stroke-width="0.9" />
<path d="M2440.6 1511.5 Q2445 1510 2451.4 1514 V1515.2 H2440.6 Z" fill="#f7b71c" stroke="none" stroke-width="1" />
<line x1="2443.3" y1="1503" x2="2443.3" y2="1511" stroke="#e4ecf6" stroke-width="1" />
<circle cx="2443.3" cy="1506.3" r="1.3" fill="#2c5fa0" stroke="#e4ecf6" stroke-width="0.8" />
<circle cx="2458.5" cy="1510.6" r="5.6" fill="#5cb0ea" stroke="none" stroke-width="1" />
<rect x="2457.8" y="1509.8" width="1.5" height="4.2" fill="#ffffff" />
<rect x="2457.8" y="1507.2" width="1.5" height="1.5" fill="#ffffff" />
<rect x="2484.6" y="1495.6" width="23" height="16" fill="none" stroke="#dcdcdc" stroke-width="1.3" />
<line x1="2500" y1="1502" x2="2504.5" y2="1497.8" stroke="#dcdcdc" stroke-width="1.3" />
<polygon points="2505.6,1496.8 2505.6,1501.6 2500.8,1496.8" fill="#dcdcdc" stroke="none" stroke-width="1" />
<line x1="2492" y1="1505.5" x2="2487.8" y2="1509.5" stroke="#dcdcdc" stroke-width="1.3" />
<polygon points="2486.5,1510.6 2486.5,1505.8 2491.3,1510.6" fill="#dcdcdc" stroke="none" stroke-width="1" />
<rect x="2520" y="1493" width="24" height="3" fill="#dcdcdc" />
<rect x="2520" y="1502" width="24" height="3" fill="#dcdcdc" />
<rect x="2520" y="1511" width="24" height="3" fill="#dcdcdc" />
</svg>
</body></html>
